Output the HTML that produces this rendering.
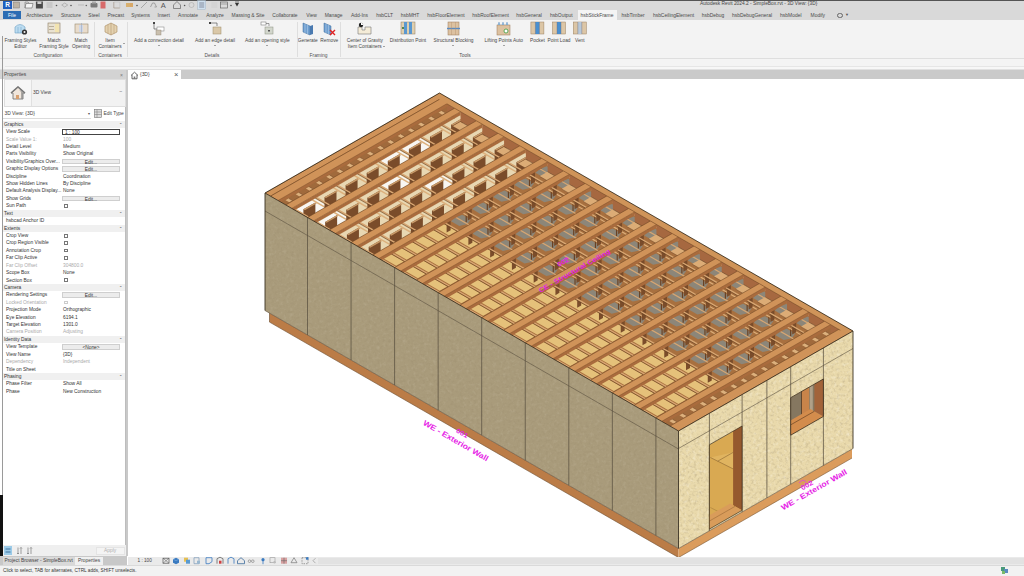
<!DOCTYPE html>
<html><head><meta charset="utf-8">
<style>
*{margin:0;padding:0;box-sizing:border-box}
html,body{width:1024px;height:576px;overflow:hidden;background:#fff;font-family:"Liberation Sans",sans-serif;color:#333}
.a{position:absolute;white-space:nowrap}
#qat{left:0;top:0;width:1024px;height:10px;background:#dadada;border-top:1px solid #555}
#tabs{left:0;top:10px;width:1024px;height:9.5px;background:#d9d9d9}
#ribbon{left:0;top:19.5px;width:1024px;height:39.5px;background:#f3f3f3;border-bottom:0.8px solid #dedede}
#opt{left:0;top:59px;width:1024px;height:11px;background:#f4f4f4;border-bottom:0.6px solid #e0e0e0}
.tab{font-size:4.95px;color:#4a4a4a;top:12.6px;transform:translateX(-50%)}
.rl{font-size:4.8px;color:#474747;text-align:center;transform:translateX(-50%);line-height:6px}
.pl{font-size:4.9px;color:#505050;top:52.8px;transform:translateX(-50%)}
.sep{top:22px;width:1px;height:35px;background:#dedede}
#props{left:3px;top:79px;width:123px;height:477px;background:#fff;border-right:1px solid #bdbdbd}
.pr{position:absolute;left:3px;width:122px;height:7.42px;font-size:4.85px;line-height:7.42px;color:#333}
.pr .l{position:absolute;left:3px}
.pr .v{position:absolute;left:60px}
.pr.h{background:#f0f0f0;color:#333}
.pr.h .l{left:1px}
.pr.g{color:#aaa}
.eb{position:absolute;left:59px;top:1px;width:58px;height:5.6px;background:#ececec;border:0.5px solid #cfcfcf;text-align:center;line-height:5px}
.cb{position:absolute;left:61px;top:1.8px;width:3.8px;height:3.8px;border:0.6px solid #777;background:#fff}
</style></head><body>
<div class="a" id="qat"></div>
<div class="a" style="left:3px;top:0.6px;width:9px;height:8px;background:#1f5fbf;color:#fff;font-size:6.5px;font-weight:bold;text-align:center;line-height:8px">R</div>
<div class="a" style="left:700px;top:1.2px;font-size:4.85px;color:#444">Autodesk Revit 2024.2 - SimpleBox.rvt - 3D View: {3D}</div>
<div class="a" id="tabs"></div>
<div class="a" style="left:3px;top:11px;width:18px;height:8px;background:#2b6cb3"></div>
<div class="a" style="left:12px;top:12.6px;font-size:4.95px;color:#fff;transform:translateX(-50%)">File</div>
<div class="a" id="ribbon"></div>
<div class="a" id="opt"></div>
<div class="a" style="left:577.5px;top:10px;width:39px;height:10px;background:#f4f4f4"></div>
<div class="a tab" style="left:597px">hsbStickFrame</div>
<div class="a tab" style="left:39.5px">Architecture</div>
<div class="a tab" style="left:71px">Structure</div>
<div class="a tab" style="left:94px">Steel</div>
<div class="a tab" style="left:115.8px">Precast</div>
<div class="a tab" style="left:140.6px">Systems</div>
<div class="a tab" style="left:163.7px">Insert</div>
<div class="a tab" style="left:188px">Annotate</div>
<div class="a tab" style="left:215px">Analyze</div>
<div class="a tab" style="left:248px">Massing & Site</div>
<div class="a tab" style="left:285px">Collaborate</div>
<div class="a tab" style="left:311.6px">View</div>
<div class="a tab" style="left:333.6px">Manage</div>
<div class="a tab" style="left:359.5px">Add-Ins</div>
<div class="a tab" style="left:384.6px">hsbCLT</div>
<div class="a tab" style="left:410px">hsbMHT</div>
<div class="a tab" style="left:446px">hsbFloorElement</div>
<div class="a tab" style="left:490.6px">hsbRoofElement</div>
<div class="a tab" style="left:529px">hsbGeneral</div>
<div class="a tab" style="left:561.3px">hsbOutput</div>
<div class="a tab" style="left:633px">hsbTimber</div>
<div class="a tab" style="left:673.5px">hsbCeilingElement</div>
<div class="a tab" style="left:713px">hsbDebug</div>
<div class="a tab" style="left:752px">hsbDebugGeneral</div>
<div class="a tab" style="left:790.8px">hsbModel</div>
<div class="a tab" style="left:817.8px">Modify</div>
<div class="a" style="left:837px;top:12.5px;width:6px;height:5px;border:0.6px solid #666;border-radius:3px"></div>
<div class="a" style="left:845px;top:12px;font-size:4px;color:#555">&#9660;</div>
<div class="a rl" style="left:20.5px;top:38.2px">Framing Styles<br>Editor</div>
<div class="a rl" style="left:54px;top:38.2px">Match<br>Framing Style</div>
<div class="a rl" style="left:81px;top:38.2px">Match<br>Opening</div>
<div class="a rl" style="left:110px;top:38.2px">Item<br>Containers</div>
<div class="a rl" style="left:159px;top:38.2px">Add a connection detail</div>
<div class="a" style="left:157.8px;top:44.5px;width:0;height:0;border-left:1.2px solid transparent;border-right:1.2px solid transparent;border-top:1.5px solid #555"></div>
<div class="a rl" style="left:215px;top:38.2px">Add an edge detail</div>
<div class="a" style="left:213.8px;top:44.5px;width:0;height:0;border-left:1.2px solid transparent;border-right:1.2px solid transparent;border-top:1.5px solid #555"></div>
<div class="a rl" style="left:267.4px;top:38.2px">Add an opening style</div>
<div class="a" style="left:266.2px;top:44.5px;width:0;height:0;border-left:1.2px solid transparent;border-right:1.2px solid transparent;border-top:1.5px solid #555"></div>
<div class="a rl" style="left:307.8px;top:38.2px">Generate</div>
<div class="a rl" style="left:329.3px;top:38.2px">Remove</div>
<div class="a rl" style="left:364.8px;top:38.2px">Center of Gravity<br>Item Containers</div>
<div class="a rl" style="left:408px;top:38.2px">Distribution Point</div>
<div class="a rl" style="left:453.5px;top:38.2px">Structural Blocking</div>
<div class="a" style="left:452.3px;top:44.5px;width:0;height:0;border-left:1.2px solid transparent;border-right:1.2px solid transparent;border-top:1.5px solid #555"></div>
<div class="a rl" style="left:503.7px;top:38.2px">Lifting Points Auto</div>
<div class="a" style="left:502.5px;top:44.5px;width:0;height:0;border-left:1.2px solid transparent;border-right:1.2px solid transparent;border-top:1.5px solid #555"></div>
<div class="a rl" style="left:537.4px;top:38.2px">Pocket</div>
<div class="a rl" style="left:559px;top:38.2px">Point Load</div>
<div class="a rl" style="left:579.8px;top:38.2px">Vent</div>
<div class="a" style="left:122.8px;top:43.3px;width:0;height:0;border-left:1.2px solid transparent;border-right:1.2px solid transparent;border-top:1.5px solid #555"></div>
<div class="a" style="left:383.3px;top:45.5px;width:0;height:0;border-left:1.2px solid transparent;border-right:1.2px solid transparent;border-top:1.5px solid #555"></div>
<div class="a pl" style="left:48px">Configuration</div>
<div class="a pl" style="left:110px">Containers</div>
<div class="a pl" style="left:212px">Details</div>
<div class="a pl" style="left:318.5px">Framing</div>
<div class="a pl" style="left:465px">Tools</div>
<div class="a sep" style="left:94px"></div>
<div class="a sep" style="left:127px"></div>
<div class="a sep" style="left:297px"></div>
<div class="a sep" style="left:340px"></div>
<svg class="a" style="left:0;top:0" width="1024" height="80"><g transform="translate(14,22)"><path d="M1,5 Q6,0 11,5 L11,11 L1,11 Z" fill="#bcdcf0" stroke="#6a9ec4" stroke-width="0.6"/><line x1="4" y1="5" x2="4" y2="11" stroke="#6a9ec4" stroke-width="0.5"/><line x1="7" y1="5" x2="7" y2="11" stroke="#6a9ec4" stroke-width="0.5"/><circle cx="10.5" cy="10" r="2.6" fill="#333"/><circle cx="10.5" cy="10" r="1" fill="#f4f4f4"/></g><g transform="translate(48,23)"><rect x="0" y="0" width="12" height="10" fill="#e9e2d2" stroke="#8a7a60" stroke-width="0.6"/><rect x="7" y="1" width="4" height="8" fill="#f3e4b0"/><line x1="1" y1="3.5" x2="6" y2="3.5" stroke="#8a7a60" stroke-width="0.5"/><line x1="1" y1="6.5" x2="6" y2="6.5" stroke="#8a7a60" stroke-width="0.5"/></g><g transform="translate(75,23)"><rect x="0" y="1" width="13" height="9" fill="#e9dccb" stroke="#9a8a70" stroke-width="0.6"/><rect x="4" y="2" width="4" height="7" fill="#d0d8e8"/><line x1="6.5" y1="0" x2="6.5" y2="11" stroke="#9aaac0" stroke-width="0.6"/></g><g transform="translate(104,22)"><path d="M1,4 L7,1 L13,4 L13,10 L7,13 L1,10 Z" fill="#e4d2b0" stroke="#a88a60" stroke-width="0.6"/><line x1="7" y1="1" x2="7" y2="13" stroke="#a88a60" stroke-width="0.5"/><line x1="4" y1="2.5" x2="4" y2="11.5" stroke="#a88a60" stroke-width="0.4"/><line x1="10" y1="2.5" x2="10" y2="11.5" stroke="#a88a60" stroke-width="0.4"/></g><g transform="translate(153,22)"><rect x="0" y="0" width="2" height="2" fill="#444"/><path d="M1,1 L1,7 L4,7" fill="none" stroke="#444" stroke-width="0.6"/><rect x="4" y="5" width="7" height="4" fill="#fff" stroke="#777" stroke-width="0.5"/><rect x="3" y="8" width="5" height="5" fill="#c9bfae" stroke="#8a8070" stroke-width="0.4"/></g><g transform="translate(209,22)"><rect x="0" y="0" width="2" height="2" fill="#444"/><path d="M1,1 L8,1 L8,4" fill="none" stroke="#444" stroke-width="0.6"/><rect x="4" y="5" width="8" height="7" fill="#dac8a8" stroke="#9a8a6a" stroke-width="0.5"/></g><g transform="translate(261,22)"><rect x="0" y="0" width="5" height="3" fill="#fff" stroke="#666" stroke-width="0.5"/><path d="M5,1.5 L8,1.5 L8,4" fill="none" stroke="#444" stroke-width="0.5"/><rect x="4" y="5" width="8" height="7" fill="#d2d6cc" stroke="#8a9080" stroke-width="0.5"/><rect x="7" y="8" width="2" height="1.5" fill="#555"/></g><g transform="translate(302,22)"><path d="M1,1 L8,4 L8,13 L1,10 Z" fill="#6f9fd0" stroke="#3a6a9a" stroke-width="0.5"/><path d="M8,4 L11,3 L11,12 L8,13 Z" fill="#4a7ab0"/><line x1="3" y1="2" x2="3" y2="11" stroke="#bcd4ee" stroke-width="0.5"/><line x1="5.5" y1="3" x2="5.5" y2="12" stroke="#bcd4ee" stroke-width="0.5"/></g><g transform="translate(323,22)"><path d="M1,1 L8,4 L8,13 L1,10 Z" fill="#6f9fd0" stroke="#3a6a9a" stroke-width="0.5"/><line x1="3" y1="2" x2="3" y2="11" stroke="#bcd4ee" stroke-width="0.5"/><line x1="5.5" y1="3" x2="5.5" y2="12" stroke="#bcd4ee" stroke-width="0.5"/><path d="M7,8 L12,13 M12,8 L7,13" stroke="#e02020" stroke-width="1.4"/></g><g transform="translate(357,22)"><path d="M1,12 L1,5 L5,5 L5,8 L8,8 L8,5 L14,5 L14,12 Z" fill="#f4ecd8" stroke="#777" stroke-width="0.6"/><circle cx="4" cy="3" r="2.2" fill="#222"/><path d="M4,0.8 A2.2,2.2 0 0 1 6.2,3 L4,3 Z" fill="#fff"/></g><g transform="translate(401,22)"><rect x="0" y="0" width="14" height="12" fill="#e0cfae" stroke="#8a7a60" stroke-width="0.5"/><rect x="3" y="0" width="3" height="12" fill="#5a98d0"/><rect x="8" y="0" width="3" height="12" fill="#5a98d0"/><circle cx="2" cy="6" r="1" fill="#2a6a2a"/></g><g transform="translate(447,22)"><rect x="1" y="0" width="11" height="13" fill="#dcc1a0" stroke="#9a7a5a" stroke-width="0.5"/><line x1="0" y1="6.5" x2="13" y2="6.5" stroke="#5a8ac0" stroke-width="1.4"/><line x1="4.5" y1="0" x2="4.5" y2="13" stroke="#b09070" stroke-width="0.4"/><line x1="8.5" y1="0" x2="8.5" y2="13" stroke="#b09070" stroke-width="0.4"/></g><g transform="translate(497,22)"><rect x="0" y="3" width="13" height="10" fill="#dcc1a0" stroke="#9a7a5a" stroke-width="0.5"/><path d="M1,3 L2,0 L3,3 M5,3 L6,0 L7,3 M9,3 L10,0 L11,3" fill="#88b8d8" stroke="#5a8ac0" stroke-width="0.4"/><circle cx="9" cy="9" r="2" fill="#fff" stroke="#3a9a3a" stroke-width="0.8"/></g><g transform="translate(530.9,22)"><rect x="0" y="0" width="13" height="12" fill="#dcc6a6" stroke="#9a8060" stroke-width="0.5"/><rect x="4.5" y="0" width="4" height="12" fill="#4a90d0"/><line x1="4.5" y1="0" x2="4.5" y2="12" stroke="#6a6a7a" stroke-width="0.4"/><line x1="8.5" y1="0" x2="8.5" y2="12" stroke="#6a6a7a" stroke-width="0.4"/></g><g transform="translate(552.5,22)"><rect x="0" y="0" width="13" height="12" fill="#dcc6a6" stroke="#9a8060" stroke-width="0.5"/><rect x="4.5" y="0" width="4" height="12" fill="#4a90d0"/><line x1="4.5" y1="0" x2="4.5" y2="12" stroke="#6a6a7a" stroke-width="0.4"/><line x1="8.5" y1="0" x2="8.5" y2="12" stroke="#6a6a7a" stroke-width="0.4"/></g><g transform="translate(573.3,22)"><rect x="0" y="0" width="13" height="12" fill="#dcc6a6" stroke="#9a8060" stroke-width="0.5"/><rect x="4.5" y="0" width="4" height="12" fill="#b8c8d8"/><line x1="4.5" y1="0" x2="4.5" y2="12" stroke="#6a6a7a" stroke-width="0.4"/><line x1="8.5" y1="0" x2="8.5" y2="12" stroke="#6a6a7a" stroke-width="0.4"/></g></svg>
<svg class="a" style="left:0;top:0" width="260" height="11"><g transform="translate(16.5,5)"><rect x="-3" y="-3" width="6" height="6" fill="#bdb3a3" stroke="#7a7a7a" stroke-width="0.5"/></g><g transform="translate(29,5)"><path d="M-4,3 L-3,-1.5 L4,-1.5 L3,3 Z" fill="#f4f4f4" stroke="#666" stroke-width="0.6"/><path d="M-4,3 V-3 H-1 L0,-2" fill="none" stroke="#666" stroke-width="0.5"/></g><g transform="translate(39.4,5)"><rect x="-3.5" y="-3.5" width="7" height="7" fill="#4a4a4a"/><rect x="-2" y="-3.5" width="4" height="2.5" fill="#ccc"/></g><g transform="translate(49.5,5)"><rect x="-3" y="-3" width="6" height="6" fill="#c8c8c8"/></g><g transform="translate(56.5,5)"><circle cx="0" cy="0.5" r="0.8" fill="#555"/></g><g transform="translate(64.7,5)"><path d="M-3,0 L0,-2 L3,0 L0,2 Z" fill="none" stroke="#999" stroke-width="0.6"/></g><g transform="translate(71,5)"><circle cx="0" cy="0.5" r="0.8" fill="#555"/></g><g transform="translate(81,5)"><path d="M-3,0 H3" stroke="#bbb" stroke-width="1"/></g><g transform="translate(86.3,5)"><circle cx="0" cy="0.5" r="0.8" fill="#666"/></g><g transform="translate(94,5)"><rect x="-3.5" y="-2" width="7" height="4.5" rx="1" fill="#7a7a7a"/><rect x="-2" y="-3.5" width="4" height="2" fill="#aaa"/></g><g transform="translate(103,5)"><rect x="-2.5" y="-3.5" width="5" height="7" fill="#d86a6a"/></g><g transform="translate(116.8,5)"><path d="M-3,-3 V3 H3" fill="none" stroke="#9a8a7a" stroke-width="0.6"/><path d="M-3,-3 H3 V3" fill="none" stroke="#bbb" stroke-width="0.5"/></g><g transform="translate(128,5)"><rect x="-2" y="-2" width="6" height="4" fill="#d8b070"/></g><g transform="translate(132,5)"><rect x="-2" y="-2" width="3" height="4" fill="#d8a868"/></g><g transform="translate(137,5)"><circle cx="0" cy="0.5" r="0.8" fill="#555"/></g><g transform="translate(144,5)"><path d="M-3,3 L3,-3" stroke="#999" stroke-width="0.8"/></g><g transform="translate(153.5,5)"><path d="M-3,2 L-1,-2 H1 M1,2 H3 L1,-2" fill="none" stroke="#888" stroke-width="0.7"/></g><g transform="translate(163.6,5)"><text x="-2.8" y="3.2" font-size="7.5" fill="#555" font-family="Liberation Sans">A</text></g><g transform="translate(177,5)"><path d="M-3.5,0 L0,-3.5 L3.5,0 V3.5 H-3.5 Z" fill="none" stroke="#666" stroke-width="0.7"/></g><g transform="translate(184.6,5)"><circle cx="0" cy="0.5" r="0.8" fill="#555"/></g><g transform="translate(191.5,5)"><circle cx="0" cy="0" r="2.5" fill="none" stroke="#aaa" stroke-width="0.6"/></g><g transform="translate(201.7,5)"><rect x="-4" y="-4.5" width="8" height="9" fill="#cfe0ef" stroke="#9ab" stroke-width="0.4"/><path d="M-2.5,-2 H2.5 M-2.5,0 H2.5 M-2.5,2 H2.5" stroke="#556" stroke-width="0.6"/></g><g transform="translate(214.4,5)"><rect x="-3" y="-3" width="6" height="6" fill="#d4d4d4"/></g><g transform="translate(224,5)"><rect x="-3.5" y="-3" width="7" height="6" fill="none" stroke="#666" stroke-width="0.7"/><path d="M-3.5,-1 H3.5" stroke="#666" stroke-width="0.5"/></g><g transform="translate(231,5)"><circle cx="0" cy="0.5" r="0.8" fill="#555"/></g><g transform="translate(237,5)"><path d="M-2,-2 H2 L0,1.5 Z" fill="#333"/><path d="M-2,-3 H2" stroke="#333" stroke-width="0.6"/></g></svg>
<div class="a" style="left:0;top:70px;width:127px;height:9px;background:#d3d3d3"></div>
<div class="a" style="left:4px;top:72px;font-size:4.9px;color:#444">Properties</div>
<div class="a" style="left:120px;top:71.5px;font-size:5px;color:#777">&#215;</div>
<div class="a" style="left:128px;top:70px;width:896px;height:9px;background:#cacaca"></div>
<div class="a" style="left:128px;top:70px;width:53px;height:9px;background:#fff"></div>
<div class="a" style="left:140px;top:72px;font-size:4.9px;color:#444">{3D}</div>
<svg class="a" style="left:129.5px;top:71px" width="9" height="9"><path d="M1,4.5 L4.5,1.2 L8,4.5 M2,3.8 V7.8 H7 V3.8" fill="none" stroke="#555" stroke-width="0.9"/><rect x="3.7" y="5.5" width="1.6" height="2.3" fill="#777"/></svg>
<div class="a" style="left:174px;top:70.3px;font-size:7.5px;color:#555">&#215;</div>
<div class="a" style="left:126px;top:70px;width:2px;height:486px;background:#c9c9c9"></div>
<div class="a" id="props" style="border-left:0"></div>
<div class="pr h" style="top:120.70px"><span class="l">Graphics</span><span style="position:absolute;right:3px;font-size:4px">&#8963;</span></div>
<div class="pr" style="top:128.12px"><span class="l">View Scale</span><div class="eb" style="background:#fff;border:0.6px solid #444;text-align:left;padding-left:2px">1 : 100</div></div>
<div class="pr g" style="top:135.54px"><span class="l">Scale Value    1:</span><span class="v">100</span></div>
<div class="pr" style="top:142.96px"><span class="l">Detail Level</span><span class="v">Medium</span></div>
<div class="pr" style="top:150.38px"><span class="l">Parts Visibility</span><span class="v">Show Original</span></div>
<div class="pr" style="top:157.80px"><span class="l">Visibility/Graphics Over...</span><div class="eb">Edit...</div></div>
<div class="pr" style="top:165.22px"><span class="l">Graphic Display Options</span><div class="eb">Edit...</div></div>
<div class="pr" style="top:172.64px"><span class="l">Discipline</span><span class="v">Coordination</span></div>
<div class="pr" style="top:180.06px"><span class="l">Show Hidden Lines</span><span class="v">By Discipline</span></div>
<div class="pr" style="top:187.48px"><span class="l">Default Analysis Display...</span><span class="v">None</span></div>
<div class="pr" style="top:194.90px"><span class="l">Show Grids</span><div class="eb">Edit...</div></div>
<div class="pr" style="top:202.32px"><span class="l">Sun Path</span><div class="cb"></div></div>
<div class="pr h" style="top:209.74px"><span class="l">Text</span><span style="position:absolute;right:3px;font-size:4px">&#8963;</span></div>
<div class="pr" style="top:217.16px"><span class="l">hsbcad Anchor ID</span><span class="v"></span></div>
<div class="pr h" style="top:224.58px"><span class="l">Extents</span><span style="position:absolute;right:3px;font-size:4px">&#8963;</span></div>
<div class="pr" style="top:232.00px"><span class="l">Crop View</span><div class="cb"></div></div>
<div class="pr" style="top:239.42px"><span class="l">Crop Region Visible</span><div class="cb"></div></div>
<div class="pr" style="top:246.84px"><span class="l">Annotation Crop</span><div class="cb"></div></div>
<div class="pr" style="top:254.26px"><span class="l">Far Clip Active</span><div class="cb"></div></div>
<div class="pr g" style="top:261.68px"><span class="l">Far Clip Offset</span><span class="v">304800.0</span></div>
<div class="pr" style="top:269.10px"><span class="l">Scope Box</span><span class="v">None</span></div>
<div class="pr" style="top:276.52px"><span class="l">Section Box</span><div class="cb"></div></div>
<div class="pr h" style="top:283.94px"><span class="l">Camera</span><span style="position:absolute;right:3px;font-size:4px">&#8963;</span></div>
<div class="pr" style="top:291.36px"><span class="l">Rendering Settings</span><div class="eb">Edit...</div></div>
<div class="pr g" style="top:298.78px"><span class="l">Locked Orientation</span><div class="cb" style="border-color:#ccc"></div></div>
<div class="pr" style="top:306.20px"><span class="l">Projection Mode</span><span class="v">Orthographic</span></div>
<div class="pr" style="top:313.62px"><span class="l">Eye Elevation</span><span class="v">6194.1</span></div>
<div class="pr" style="top:321.04px"><span class="l">Target Elevation</span><span class="v">1301.0</span></div>
<div class="pr g" style="top:328.46px"><span class="l">Camera Position</span><span class="v">Adjusting</span></div>
<div class="pr h" style="top:335.88px"><span class="l">Identity Data</span><span style="position:absolute;right:3px;font-size:4px">&#8963;</span></div>
<div class="pr" style="top:343.30px"><span class="l">View Template</span><div class="eb">&lt;None&gt;</div></div>
<div class="pr" style="top:350.72px"><span class="l">View Name</span><span class="v">{3D}</span></div>
<div class="pr g" style="top:358.14px"><span class="l">Dependency</span><span class="v">Independent</span></div>
<div class="pr" style="top:365.56px"><span class="l">Title on Sheet</span><span class="v"></span></div>
<div class="pr h" style="top:372.98px"><span class="l">Phasing</span><span style="position:absolute;right:3px;font-size:4px">&#8963;</span></div>
<div class="pr" style="top:380.40px"><span class="l">Phase Filter</span><span class="v">Show All</span></div>
<div class="pr" style="top:387.82px"><span class="l">Phase</span><span class="v">New Construction</span></div>
<div class="a" style="left:0;top:495px;width:2.5px;height:65px;background:#111"></div>
<div class="a" style="left:1.5px;top:36px;width:1px;height:459px;background:#9a9a9a"></div>
<div class="a" style="left:5px;top:65.5px;width:1019px;height:3px;background:#f7f7f7;border-top:0.5px solid #e6e6e6"></div>
<svg class="a" style="left:0;top:0" width="1024" height="576" viewBox="0 0 1024 576">
<defs><filter id="osb" x="0" y="0" width="100%" height="100%"><feTurbulence type="fractalNoise" baseFrequency="0.35" numOctaves="2" seed="7"/><feColorMatrix type="matrix" values="0 0 0 0 0.30  0 0 0 0 0.24  0 0 0 0 0.14  2.2 0 0 0 -1.05"/><feComposite in2="SourceGraphic" operator="in"/></filter><filter id="osb2" x="0" y="0" width="100%" height="100%"><feTurbulence type="fractalNoise" baseFrequency="0.3" numOctaves="2" seed="11"/><feColorMatrix type="matrix" values="0 0 0 0 1  0 0 0 0 0.97  0 0 0 0 0.88  0 2.2 0 0 -1.1"/><feComposite in2="SourceGraphic" operator="in"/></filter><clipPath id="cdoor"><polygon points="709.40,444.79 742.10,426.05 742.10,510.35 709.40,529.09"/></clipPath><clipPath id="cwin"><polygon points="790.70,397.70 823.40,378.96 823.40,416.46 790.70,435.20"/></clipPath><clipPath id="croof"><polygon points="265.00,193.00 439.50,93.00 853.00,331.00 678.50,431.00"/></clipPath></defs>
<polygon points="269.50,313.09 678.50,548.50 678.50,557.50 269.50,322.09" fill="#bb7c47"/>
<polygon points="678.50,548.50 852.00,449.07 852.00,458.07 678.50,557.50" fill="#db9c5c"/>
<line x1="269.50" y1="322.09" x2="678.50" y2="557.50" stroke="#6b4a2a" stroke-width="0.6"/>
<line x1="678.50" y1="557.50" x2="852.00" y2="458.07" stroke="#7a5530" stroke-width="0.6"/>
<line x1="269.50" y1="313.09" x2="269.50" y2="322.09" stroke="#6b4a2a" stroke-width="0.6"/>
<polygon points="265.00,193.00 678.50,431.00 678.50,548.50 265.00,310.50" fill="#a99b7b"/>
<polygon points="678.50,431.00 853.00,331.00 853.00,448.50 678.50,548.50" fill="#e9d9ab"/>
<g opacity="0.30"><polygon points="265.00,193.00 678.50,431.00 678.50,548.50 265.00,310.50" fill="#fff" filter="url(#osb)"/></g>
<g opacity="0.10"><polygon points="265.00,193.00 678.50,431.00 678.50,548.50 265.00,310.50" fill="#fff" filter="url(#osb2)"/></g>
<g opacity="0.35"><polygon points="678.50,431.00 853.00,331.00 853.00,448.50 678.50,548.50" fill="#fff" filter="url(#osb)"/></g>
<g opacity="0.40"><polygon points="678.50,431.00 853.00,331.00 853.00,448.50 678.50,548.50" fill="#fff" filter="url(#osb2)"/></g>
<line x1="265.00" y1="211.00" x2="678.50" y2="449.00" stroke="#5a5040" stroke-width="0.6"/>
<line x1="678.50" y1="448.50" x2="853.00" y2="348.50" stroke="#5a5040" stroke-width="0.6"/>
<line x1="307.50" y1="217.46" x2="307.50" y2="334.96" stroke="#5a5040" stroke-width="0.75"/>
<line x1="351.05" y1="242.53" x2="351.05" y2="360.03" stroke="#5a5040" stroke-width="0.75"/>
<line x1="394.60" y1="267.59" x2="394.60" y2="385.09" stroke="#5a5040" stroke-width="0.75"/>
<line x1="438.15" y1="292.66" x2="438.15" y2="410.16" stroke="#5a5040" stroke-width="0.75"/>
<line x1="481.70" y1="317.73" x2="481.70" y2="435.23" stroke="#5a5040" stroke-width="0.75"/>
<line x1="525.25" y1="342.79" x2="525.25" y2="460.29" stroke="#5a5040" stroke-width="0.75"/>
<line x1="568.80" y1="367.86" x2="568.80" y2="485.36" stroke="#5a5040" stroke-width="0.75"/>
<line x1="612.35" y1="392.93" x2="612.35" y2="510.43" stroke="#5a5040" stroke-width="0.75"/>
<line x1="655.90" y1="417.99" x2="655.90" y2="535.49" stroke="#5a5040" stroke-width="0.75"/>
<line x1="709.40" y1="413.29" x2="709.40" y2="530.79" stroke="#5a5040" stroke-width="0.75"/>
<line x1="742.10" y1="394.55" x2="742.10" y2="512.05" stroke="#5a5040" stroke-width="0.75"/>
<line x1="766.90" y1="380.34" x2="766.90" y2="497.84" stroke="#5a5040" stroke-width="0.75"/>
<line x1="790.70" y1="366.70" x2="790.70" y2="484.20" stroke="#5a5040" stroke-width="0.75"/>
<line x1="823.40" y1="347.96" x2="823.40" y2="465.46" stroke="#5a5040" stroke-width="0.75"/>
<g clip-path="url(#cdoor)"><polygon points="709.40,444.79 742.10,426.05 742.10,510.35 709.40,529.09" fill="#d9a952"/><polygon points="710.40,457.50 733.30,469.00 733.30,452.30" fill="#e0b460"/><line x1="710.40" y1="457.50" x2="733.30" y2="469.00" stroke="#8a6430" stroke-width="0.6"/><line x1="717.70" y1="461.20" x2="733.30" y2="452.30" stroke="#8a6430" stroke-width="0.6"/><line x1="710.40" y1="507.50" x2="722.00" y2="513.50" stroke="#9a7436" stroke-width="0.5"/><polygon points="742.10,426.05 733.10,420.87 733.10,505.17 742.10,510.35" fill="#95592e"/><polygon points="709.40,529.09 742.10,510.35 730.10,503.45 697.40,522.19" fill="#d99c5a"/><line x1="702.40" y1="525.06" x2="735.10" y2="506.32" stroke="#9a6a38" stroke-width="0.6"/></g>
<polygon points="709.40,444.79 742.10,426.05 742.10,510.35 709.40,529.09" fill="none" stroke="#3e3020" stroke-width="0.7"/>
<g clip-path="url(#cwin)"><polygon points="790.70,397.70 823.40,378.96 823.40,416.46 790.70,435.20" fill="#857760"/><polygon points="801.10,371.40 801.90,370.95 801.90,428.45 801.10,428.90" fill="#4a3420"/><polygon points="801.90,370.95 809.20,366.76 809.20,424.26 801.90,428.45" fill="#c8844a"/><polygon points="809.80,366.42 812.80,364.70 812.80,422.20 809.80,423.92" fill="#b0a088"/><polygon points="823.40,378.96 814.40,373.78 814.40,411.28 823.40,416.46" fill="#a2633a"/><polygon points="790.70,435.20 823.40,416.46 810.40,408.98 777.70,427.72" fill="#d38c4c"/><line x1="781.70" y1="430.02" x2="814.40" y2="411.28" stroke="#6a4424" stroke-width="0.7"/></g>
<polygon points="790.70,397.70 823.40,378.96 823.40,416.46 790.70,435.20" fill="none" stroke="#3e3020" stroke-width="0.8"/>
<line x1="265.00" y1="193.00" x2="265.00" y2="310.50" stroke="#3a3122" stroke-width="0.9"/>
<line x1="678.50" y1="431.00" x2="678.50" y2="548.50" stroke="#3a3122" stroke-width="0.9"/>
<line x1="853.00" y1="331.00" x2="853.00" y2="448.50" stroke="#3a3122" stroke-width="0.9"/>
<line x1="265.00" y1="310.50" x2="678.50" y2="548.50" stroke="#5a4a35" stroke-width="0.6"/>
<line x1="678.50" y1="548.50" x2="853.00" y2="448.50" stroke="#5a4a35" stroke-width="0.6"/>
<g clip-path="url(#croof)"><polygon points="265.00,193.00 439.50,93.00 853.00,331.00 678.50,431.00" fill="#a8703f"/><polygon points="278.00,200.48 285.76,204.95 454.56,108.22 446.80,103.75" fill="#a06a3c"/><polygon points="285.50,200.20 289.26,202.37 292.46,200.54 288.70,198.37" fill="#dcb07c"/><line x1="288.70" y1="198.37" x2="292.46" y2="200.54" stroke="#6e4526" stroke-width="0.5"/><polygon points="295.70,194.36 299.46,196.53 302.66,194.69 298.90,192.53" fill="#dcb07c"/><line x1="298.90" y1="192.53" x2="302.66" y2="194.69" stroke="#6e4526" stroke-width="0.5"/><polygon points="305.90,188.51 309.66,190.68 312.86,188.85 309.10,186.68" fill="#dcb07c"/><line x1="309.10" y1="186.68" x2="312.86" y2="188.85" stroke="#6e4526" stroke-width="0.5"/><polygon points="316.10,182.67 319.86,184.83 323.06,183.00 319.30,180.84" fill="#dcb07c"/><line x1="319.30" y1="180.84" x2="323.06" y2="183.00" stroke="#6e4526" stroke-width="0.5"/><polygon points="326.30,176.82 330.06,178.99 333.26,177.16 329.50,174.99" fill="#dcb07c"/><line x1="329.50" y1="174.99" x2="333.26" y2="177.16" stroke="#6e4526" stroke-width="0.5"/><polygon points="336.50,170.98 340.26,173.14 343.46,171.31 339.70,169.14" fill="#dcb07c"/><line x1="339.70" y1="169.14" x2="343.46" y2="171.31" stroke="#6e4526" stroke-width="0.5"/><polygon points="346.70,165.13 350.46,167.30 353.66,165.47 349.90,163.30" fill="#dcb07c"/><line x1="349.90" y1="163.30" x2="353.66" y2="165.47" stroke="#6e4526" stroke-width="0.5"/><polygon points="356.90,159.29 360.66,161.45 363.86,159.62 360.10,157.45" fill="#dcb07c"/><line x1="360.10" y1="157.45" x2="363.86" y2="159.62" stroke="#6e4526" stroke-width="0.5"/><polygon points="367.10,153.44 370.86,155.61 374.06,153.77 370.30,151.61" fill="#dcb07c"/><line x1="370.30" y1="151.61" x2="374.06" y2="153.77" stroke="#6e4526" stroke-width="0.5"/><polygon points="377.30,147.60 381.06,149.76 384.26,147.93 380.50,145.76" fill="#dcb07c"/><line x1="380.50" y1="145.76" x2="384.26" y2="147.93" stroke="#6e4526" stroke-width="0.5"/><polygon points="387.50,141.75 391.26,143.92 394.46,142.08 390.70,139.92" fill="#dcb07c"/><line x1="390.70" y1="139.92" x2="394.46" y2="142.08" stroke="#6e4526" stroke-width="0.5"/><polygon points="397.70,135.91 401.46,138.07 404.66,136.24 400.90,134.07" fill="#dcb07c"/><line x1="400.90" y1="134.07" x2="404.66" y2="136.24" stroke="#6e4526" stroke-width="0.5"/><polygon points="407.90,130.06 411.66,132.23 414.86,130.39 411.10,128.23" fill="#dcb07c"/><line x1="411.10" y1="128.23" x2="414.86" y2="130.39" stroke="#6e4526" stroke-width="0.5"/><polygon points="418.10,124.22 421.86,126.38 425.06,124.55 421.30,122.38" fill="#dcb07c"/><line x1="421.30" y1="122.38" x2="425.06" y2="124.55" stroke="#6e4526" stroke-width="0.5"/><polygon points="428.30,118.37 432.06,120.54 435.26,118.70 431.50,116.54" fill="#dcb07c"/><line x1="431.50" y1="116.54" x2="435.26" y2="118.70" stroke="#6e4526" stroke-width="0.5"/><polygon points="438.50,112.53 442.26,114.69 445.46,112.86 441.70,110.69" fill="#dcb07c"/><line x1="441.70" y1="110.69" x2="445.46" y2="112.86" stroke="#6e4526" stroke-width="0.5"/><polygon points="448.70,106.68 452.46,108.85 455.66,107.01 451.90,104.85" fill="#dcb07c"/><line x1="451.90" y1="104.85" x2="455.66" y2="107.01" stroke="#6e4526" stroke-width="0.5"/><polygon points="291.76,208.40 307.53,217.48 328.63,205.39 312.86,196.31" fill="#dcc49a"/><polygon points="296.42,209.36 309.03,216.62 327.63,205.96 315.02,198.70" fill="#f8f6f2"/><polygon points="303.38,209.35 315.38,202.47 315.38,216.47 303.38,223.35" fill="#7a4c2a"/><polygon points="303.38,209.35 315.38,202.47 316.88,203.34 304.88,210.21" fill="#c89a68"/><polygon points="308.76,198.66 324.53,207.73 326.03,206.88 310.26,197.80" fill="#dcb07c"/><polygon points="312.86,196.31 328.63,205.39 349.73,193.29 333.96,184.22" fill="#dcc49a"/><polygon points="317.52,197.27 330.13,204.53 348.73,193.87 336.12,186.61" fill="#e8d7b2"/><polygon points="324.48,197.26 336.48,190.38 336.48,204.38 324.48,211.26" fill="#7a4c2a"/><polygon points="324.48,197.26 336.48,190.38 337.98,191.24 325.98,198.12" fill="#c89a68"/><polygon points="329.86,186.57 345.63,195.64 347.13,194.78 331.36,185.71" fill="#dcb07c"/><polygon points="333.96,184.22 349.73,193.29 370.83,181.20 355.06,172.13" fill="#dcc49a"/><polygon points="338.62,185.18 351.23,192.43 369.83,181.78 357.22,174.52" fill="#e8d7b2"/><polygon points="345.58,185.17 357.58,178.29 357.58,192.29 345.58,199.17" fill="#7a4c2a"/><polygon points="345.58,185.17 357.58,178.29 359.08,179.15 347.08,186.03" fill="#c89a68"/><polygon points="350.96,174.48 366.73,183.55 368.23,182.69 352.46,173.62" fill="#dcb07c"/><polygon points="355.06,172.13 370.83,181.20 391.93,169.11 376.16,160.04" fill="#dcc49a"/><polygon points="359.72,173.08 372.33,180.34 390.93,169.68 378.32,162.43" fill="#e8d7b2"/><polygon points="366.68,173.07 378.68,166.20 378.68,180.20 366.68,187.07" fill="#7a4c2a"/><polygon points="366.68,173.07 378.68,166.20 380.18,167.06 368.18,173.94" fill="#c89a68"/><polygon points="372.06,162.39 387.83,171.46 389.33,170.60 373.56,161.53" fill="#dcb07c"/><polygon points="376.16,160.04 391.93,169.11 413.03,157.02 397.26,147.95" fill="#dcc49a"/><polygon points="380.82,160.99 393.43,168.25 412.03,157.59 399.42,150.33" fill="#f8f6f2"/><polygon points="387.78,160.98 399.78,154.11 399.78,168.11 387.78,174.98" fill="#7a4c2a"/><polygon points="387.78,160.98 399.78,154.11 401.28,154.97 389.28,161.85" fill="#c89a68"/><polygon points="393.16,150.30 408.93,159.37 410.43,158.51 394.66,149.44" fill="#dcb07c"/><polygon points="397.26,147.95 413.03,157.02 434.13,144.93 418.36,135.85" fill="#dcc49a"/><polygon points="401.92,148.90 414.53,156.16 433.13,145.50 420.52,138.24" fill="#f8f6f2"/><polygon points="408.88,148.89 420.88,142.01 420.88,156.01 408.88,162.89" fill="#7a4c2a"/><polygon points="408.88,148.89 420.88,142.01 422.38,142.88 410.38,149.75" fill="#c89a68"/><polygon points="414.26,138.20 430.03,147.28 431.53,146.42 415.76,137.34" fill="#dcb07c"/><polygon points="418.36,135.85 434.13,144.93 455.23,132.84 439.46,123.76" fill="#dcc49a"/><polygon points="423.02,136.81 435.63,144.07 454.23,133.41 441.62,126.15" fill="#e8d7b2"/><polygon points="429.98,136.80 441.98,129.92 441.98,143.92 429.98,150.80" fill="#7a4c2a"/><polygon points="429.98,136.80 441.98,129.92 443.48,130.79 431.48,137.66" fill="#c89a68"/><polygon points="435.36,126.11 451.13,135.18 452.63,134.33 436.86,125.25" fill="#dcb07c"/><polygon points="439.46,123.76 455.23,132.84 476.33,120.74 460.56,111.67" fill="#dcc49a"/><polygon points="444.12,124.72 456.73,131.98 475.33,121.32 462.72,114.06" fill="#e8d7b2"/><polygon points="451.08,124.71 463.08,117.83 463.08,131.83 451.08,138.71" fill="#7a4c2a"/><polygon points="451.08,124.71 463.08,117.83 464.58,118.69 452.58,125.57" fill="#c89a68"/><polygon points="456.46,114.02 472.23,123.09 473.73,122.23 457.96,113.16" fill="#dcb07c"/><polygon points="291.76,208.40 307.53,217.48 309.03,216.62 293.26,207.54" fill="#d8a672"/><line x1="291.46" y1="208.58" x2="307.23" y2="217.65" stroke="#5e3b1e" stroke-width="0.55"/><polygon points="312.86,196.31 328.63,205.39 330.13,204.53 314.36,195.45" fill="#d8a672"/><line x1="312.56" y1="196.48" x2="328.33" y2="205.56" stroke="#5e3b1e" stroke-width="0.55"/><polygon points="333.96,184.22 349.73,193.29 351.23,192.43 335.46,183.36" fill="#d8a672"/><line x1="333.66" y1="184.39" x2="349.43" y2="193.47" stroke="#5e3b1e" stroke-width="0.55"/><polygon points="355.06,172.13 370.83,181.20 372.33,180.34 356.56,171.27" fill="#d8a672"/><line x1="354.76" y1="172.30" x2="370.53" y2="181.37" stroke="#5e3b1e" stroke-width="0.55"/><polygon points="376.16,160.04 391.93,169.11 393.43,168.25 377.66,159.18" fill="#d8a672"/><line x1="375.86" y1="160.21" x2="391.63" y2="169.28" stroke="#5e3b1e" stroke-width="0.55"/><polygon points="397.26,147.95 413.03,157.02 414.53,156.16 398.76,147.09" fill="#d8a672"/><line x1="396.96" y1="148.12" x2="412.73" y2="157.19" stroke="#5e3b1e" stroke-width="0.55"/><polygon points="418.36,135.85 434.13,144.93 435.63,144.07 419.86,134.99" fill="#d8a672"/><line x1="418.06" y1="136.03" x2="433.83" y2="145.10" stroke="#5e3b1e" stroke-width="0.55"/><polygon points="439.46,123.76 455.23,132.84 456.73,131.98 440.96,122.90" fill="#d8a672"/><line x1="439.16" y1="123.93" x2="454.93" y2="133.01" stroke="#5e3b1e" stroke-width="0.55"/><polygon points="460.56,111.67 476.33,120.74 477.83,119.88 462.06,110.81" fill="#d8a672"/><line x1="460.26" y1="111.84" x2="476.03" y2="120.92" stroke="#5e3b1e" stroke-width="0.55"/><polygon points="313.53,220.93 329.29,230.00 350.39,217.91 334.63,208.84" fill="#dcc49a"/><polygon points="318.18,221.89 330.79,229.14 349.39,218.48 336.78,211.23" fill="#f8f6f2"/><polygon points="325.15,221.88 337.15,215.00 337.15,229.00 325.15,235.88" fill="#7a4c2a"/><polygon points="325.15,221.88 337.15,215.00 338.65,215.86 326.65,222.74" fill="#c89a68"/><polygon points="330.53,211.19 346.29,220.26 347.79,219.40 332.03,210.33" fill="#dcb07c"/><polygon points="334.63,208.84 350.39,217.91 371.49,205.82 355.73,196.75" fill="#dcc49a"/><polygon points="339.28,209.79 351.89,217.05 370.49,206.39 357.88,199.13" fill="#e8d7b2"/><polygon points="346.25,209.78 358.25,202.91 358.25,216.91 346.25,223.78" fill="#7a4c2a"/><polygon points="346.25,209.78 358.25,202.91 359.75,203.77 347.75,210.65" fill="#c89a68"/><polygon points="351.63,199.10 367.39,208.17 368.89,207.31 353.13,198.24" fill="#dcb07c"/><polygon points="355.73,196.75 371.49,205.82 392.59,193.73 376.83,184.66" fill="#dcc49a"/><polygon points="360.38,197.70 372.99,204.96 391.59,194.30 378.98,187.04" fill="#e8d7b2"/><polygon points="367.35,197.69 379.35,190.82 379.35,204.82 367.35,211.69" fill="#7a4c2a"/><polygon points="367.35,197.69 379.35,190.82 380.85,191.68 368.85,198.56" fill="#c89a68"/><polygon points="372.73,187.01 388.49,196.08 389.99,195.22 374.23,186.15" fill="#dcb07c"/><polygon points="376.83,184.66 392.59,193.73 413.69,181.64 397.93,172.56" fill="#dcc49a"/><polygon points="381.48,185.61 394.09,192.87 412.69,182.21 400.08,174.95" fill="#f8f6f2"/><polygon points="388.45,185.60 400.45,178.72 400.45,192.72 388.45,199.60" fill="#7a4c2a"/><polygon points="388.45,185.60 400.45,178.72 401.95,179.59 389.95,186.46" fill="#c89a68"/><polygon points="393.83,174.91 409.59,183.99 411.09,183.13 395.33,174.05" fill="#dcb07c"/><polygon points="397.93,172.56 413.69,181.64 434.79,169.54 419.03,160.47" fill="#dcc49a"/><polygon points="402.58,173.52 415.19,180.78 433.79,170.12 421.18,162.86" fill="#e8d7b2"/><polygon points="409.55,173.51 421.55,166.63 421.55,180.63 409.55,187.51" fill="#7a4c2a"/><polygon points="409.55,173.51 421.55,166.63 423.05,167.50 411.05,174.37" fill="#c89a68"/><polygon points="414.93,162.82 430.69,171.89 432.19,171.03 416.43,161.96" fill="#dcb07c"/><polygon points="419.03,160.47 434.79,169.54 455.89,157.45 440.13,148.38" fill="#dcc49a"/><polygon points="423.68,161.43 436.29,168.69 454.89,158.03 442.28,150.77" fill="#e8d7b2"/><polygon points="430.65,161.42 442.65,154.54 442.65,168.54 430.65,175.42" fill="#7a4c2a"/><polygon points="430.65,161.42 442.65,154.54 444.15,155.40 432.15,162.28" fill="#c89a68"/><polygon points="436.03,150.73 451.79,159.80 453.29,158.94 437.53,149.87" fill="#dcb07c"/><polygon points="440.13,148.38 455.89,157.45 476.99,145.36 461.23,136.29" fill="#dcc49a"/><polygon points="444.78,149.34 457.39,156.59 475.99,145.93 463.38,138.68" fill="#e8d7b2"/><polygon points="451.75,149.33 463.75,142.45 463.75,156.45 451.75,163.33" fill="#7a4c2a"/><polygon points="451.75,149.33 463.75,142.45 465.25,143.31 453.25,150.19" fill="#c89a68"/><polygon points="457.13,138.64 472.89,147.71 474.39,146.85 458.63,137.78" fill="#dcb07c"/><polygon points="461.23,136.29 476.99,145.36 498.09,133.27 482.33,124.20" fill="#dcc49a"/><polygon points="465.88,137.24 478.49,144.50 497.09,133.84 484.48,126.58" fill="#e8d7b2"/><polygon points="472.85,137.23 484.85,130.36 484.85,144.36 472.85,151.23" fill="#7a4c2a"/><polygon points="472.85,137.23 484.85,130.36 486.35,131.22 474.35,138.10" fill="#c89a68"/><polygon points="478.23,126.55 493.99,135.62 495.49,134.76 479.73,125.69" fill="#dcb07c"/><polygon points="313.53,220.93 329.29,230.00 330.79,229.14 315.03,220.07" fill="#d8a672"/><line x1="313.23" y1="221.10" x2="328.99" y2="230.18" stroke="#5e3b1e" stroke-width="0.55"/><polygon points="334.63,208.84 350.39,217.91 351.89,217.05 336.13,207.98" fill="#d8a672"/><line x1="334.33" y1="209.01" x2="350.09" y2="218.08" stroke="#5e3b1e" stroke-width="0.55"/><polygon points="355.73,196.75 371.49,205.82 372.99,204.96 357.23,195.89" fill="#d8a672"/><line x1="355.43" y1="196.92" x2="371.19" y2="205.99" stroke="#5e3b1e" stroke-width="0.55"/><polygon points="376.83,184.66 392.59,193.73 394.09,192.87 378.33,183.80" fill="#d8a672"/><line x1="376.53" y1="184.83" x2="392.29" y2="193.90" stroke="#5e3b1e" stroke-width="0.55"/><polygon points="397.93,172.56 413.69,181.64 415.19,180.78 399.43,171.70" fill="#d8a672"/><line x1="397.63" y1="172.74" x2="413.39" y2="181.81" stroke="#5e3b1e" stroke-width="0.55"/><polygon points="419.03,160.47 434.79,169.54 436.29,168.69 420.53,159.61" fill="#d8a672"/><line x1="418.73" y1="160.64" x2="434.49" y2="169.72" stroke="#5e3b1e" stroke-width="0.55"/><polygon points="440.13,148.38 455.89,157.45 457.39,156.59 441.63,147.52" fill="#d8a672"/><line x1="439.83" y1="148.55" x2="455.59" y2="157.63" stroke="#5e3b1e" stroke-width="0.55"/><polygon points="461.23,136.29 476.99,145.36 478.49,144.50 462.73,135.43" fill="#d8a672"/><line x1="460.93" y1="136.46" x2="476.69" y2="145.53" stroke="#5e3b1e" stroke-width="0.55"/><polygon points="482.33,124.20 498.09,133.27 499.59,132.41 483.83,123.34" fill="#d8a672"/><line x1="482.03" y1="124.37" x2="497.79" y2="133.44" stroke="#5e3b1e" stroke-width="0.55"/><polygon points="335.29,233.46 351.05,242.53 372.15,230.44 356.39,221.37" fill="#dcc49a"/><polygon points="339.94,234.41 352.55,241.67 371.15,231.01 358.54,223.75" fill="#e8d7b2"/><polygon points="346.91,234.40 358.91,227.53 358.91,241.53 346.91,248.40" fill="#7a4c2a"/><polygon points="346.91,234.40 358.91,227.53 360.41,228.39 348.41,235.27" fill="#c89a68"/><polygon points="352.29,223.71 368.05,232.79 369.55,231.93 353.79,222.86" fill="#dcb07c"/><polygon points="356.39,221.37 372.15,230.44 393.25,218.35 377.49,209.27" fill="#dcc49a"/><polygon points="361.04,222.32 373.65,229.58 392.25,218.92 379.64,211.66" fill="#e8d7b2"/><polygon points="368.01,222.31 380.01,215.43 380.01,229.43 368.01,236.31" fill="#7a4c2a"/><polygon points="368.01,222.31 380.01,215.43 381.51,216.30 369.51,223.17" fill="#c89a68"/><polygon points="373.39,211.62 389.15,220.70 390.65,219.84 374.89,210.76" fill="#dcb07c"/><polygon points="377.49,209.27 393.25,218.35 414.35,206.25 398.59,197.18" fill="#dcc49a"/><polygon points="382.14,210.23 394.75,217.49 413.35,206.83 400.74,199.57" fill="#e8d7b2"/><polygon points="389.11,210.22 401.11,203.34 401.11,217.34 389.11,224.22" fill="#7a4c2a"/><polygon points="389.11,210.22 401.11,203.34 402.61,204.21 390.61,211.08" fill="#c89a68"/><polygon points="394.49,199.53 410.25,208.60 411.75,207.74 395.99,198.67" fill="#dcb07c"/><polygon points="398.59,197.18 414.35,206.25 435.45,194.16 419.69,185.09" fill="#dcc49a"/><polygon points="403.24,198.14 415.85,205.40 434.45,194.74 421.84,187.48" fill="#e8d7b2"/><polygon points="410.21,198.13 422.21,191.25 422.21,205.25 410.21,212.13" fill="#7a4c2a"/><polygon points="410.21,198.13 422.21,191.25 423.71,192.11 411.71,198.99" fill="#c89a68"/><polygon points="415.59,187.44 431.35,196.51 432.85,195.65 417.09,186.58" fill="#dcb07c"/><polygon points="419.69,185.09 435.45,194.16 456.55,182.07 440.79,173.00" fill="#dcc49a"/><polygon points="424.34,186.05 436.95,193.30 455.55,182.64 442.94,175.39" fill="#f8f6f2"/><polygon points="431.31,186.04 443.31,179.16 443.31,193.16 431.31,200.04" fill="#7a4c2a"/><polygon points="431.31,186.04 443.31,179.16 444.81,180.02 432.81,186.90" fill="#c89a68"/><polygon points="436.69,175.35 452.45,184.42 453.95,183.56 438.19,174.49" fill="#dcb07c"/><polygon points="440.79,173.00 456.55,182.07 477.65,169.98 461.89,160.91" fill="#dcc49a"/><polygon points="445.44,173.95 458.05,181.21 476.65,170.55 464.04,163.29" fill="#e8d7b2"/><polygon points="452.41,173.94 464.41,167.07 464.41,181.07 452.41,187.94" fill="#7a4c2a"/><polygon points="452.41,173.94 464.41,167.07 465.91,167.93 453.91,174.81" fill="#c89a68"/><polygon points="457.79,163.26 473.55,172.33 475.05,171.47 459.29,162.40" fill="#dcb07c"/><polygon points="461.89,160.91 477.65,169.98 498.75,157.89 482.99,148.81" fill="#dcc49a"/><polygon points="466.54,161.86 479.15,169.12 497.75,158.46 485.14,151.20" fill="#e8d7b2"/><polygon points="473.51,161.85 485.51,154.98 485.51,168.98 473.51,175.85" fill="#7a4c2a"/><polygon points="473.51,161.85 485.51,154.98 487.01,155.84 475.01,162.72" fill="#c89a68"/><polygon points="478.89,151.16 494.65,160.24 496.15,159.38 480.39,150.30" fill="#dcb07c"/><polygon points="482.99,148.81 498.75,157.89 519.85,145.80 504.09,136.72" fill="#dcc49a"/><polygon points="487.64,149.77 500.25,157.03 518.85,146.37 506.24,139.11" fill="#e8d7b2"/><polygon points="494.61,149.76 506.61,142.88 506.61,156.88 494.61,163.76" fill="#7a4c2a"/><polygon points="494.61,149.76 506.61,142.88 508.11,143.75 496.11,150.62" fill="#c89a68"/><polygon points="499.99,139.07 515.75,148.15 517.25,147.29 501.49,138.21" fill="#dcb07c"/><polygon points="335.29,233.46 351.05,242.53 352.55,241.67 336.79,232.60" fill="#d8a672"/><line x1="334.99" y1="233.63" x2="350.75" y2="242.70" stroke="#5e3b1e" stroke-width="0.55"/><polygon points="356.39,221.37 372.15,230.44 373.65,229.58 357.89,220.51" fill="#d8a672"/><line x1="356.09" y1="221.54" x2="371.85" y2="230.61" stroke="#5e3b1e" stroke-width="0.55"/><polygon points="377.49,209.27 393.25,218.35 394.75,217.49 378.99,208.41" fill="#d8a672"/><line x1="377.19" y1="209.45" x2="392.95" y2="218.52" stroke="#5e3b1e" stroke-width="0.55"/><polygon points="398.59,197.18 414.35,206.25 415.85,205.40 400.09,196.32" fill="#d8a672"/><line x1="398.29" y1="197.35" x2="414.05" y2="206.43" stroke="#5e3b1e" stroke-width="0.55"/><polygon points="419.69,185.09 435.45,194.16 436.95,193.30 421.19,184.23" fill="#d8a672"/><line x1="419.39" y1="185.26" x2="435.15" y2="194.33" stroke="#5e3b1e" stroke-width="0.55"/><polygon points="440.79,173.00 456.55,182.07 458.05,181.21 442.29,172.14" fill="#d8a672"/><line x1="440.49" y1="173.17" x2="456.25" y2="182.24" stroke="#5e3b1e" stroke-width="0.55"/><polygon points="461.89,160.91 477.65,169.98 479.15,169.12 463.39,160.05" fill="#d8a672"/><line x1="461.59" y1="161.08" x2="477.35" y2="170.15" stroke="#5e3b1e" stroke-width="0.55"/><polygon points="482.99,148.81 498.75,157.89 500.25,157.03 484.49,147.96" fill="#d8a672"/><line x1="482.69" y1="148.99" x2="498.45" y2="158.06" stroke="#5e3b1e" stroke-width="0.55"/><polygon points="504.09,136.72 519.85,145.80 521.35,144.94 505.59,135.86" fill="#d8a672"/><line x1="503.79" y1="136.90" x2="519.55" y2="145.97" stroke="#5e3b1e" stroke-width="0.55"/><polygon points="357.05,245.98 372.82,255.06 393.92,242.96 378.15,233.89" fill="#dcc49a"/><polygon points="361.71,246.94 374.32,254.20 392.92,243.54 380.31,236.28" fill="#e8d7b2"/><polygon points="368.67,246.93 380.67,240.05 380.67,254.05 368.67,260.93" fill="#7a4c2a"/><polygon points="368.67,246.93 380.67,240.05 382.17,240.91 370.17,247.79" fill="#c89a68"/><polygon points="374.05,236.24 389.82,245.31 391.32,244.45 375.55,235.38" fill="#dcb07c"/><polygon points="378.15,233.89 393.92,242.96 415.02,230.87 399.25,221.80" fill="#dcc49a"/><polygon points="382.81,234.85 395.42,242.10 414.02,231.45 401.41,224.19" fill="#e8d7b2"/><polygon points="389.77,234.84 401.77,227.96 401.77,241.96 389.77,248.84" fill="#7a4c2a"/><polygon points="389.77,234.84 401.77,227.96 403.27,228.82 391.27,235.70" fill="#c89a68"/><polygon points="395.15,224.15 410.92,233.22 412.42,232.36 396.65,223.29" fill="#dcb07c"/><polygon points="399.25,221.80 415.02,230.87 436.12,218.78 420.35,209.71" fill="#dcc49a"/><polygon points="403.91,222.75 416.52,230.01 435.12,219.35 422.51,212.10" fill="#e8d7b2"/><polygon points="410.87,222.75 422.87,215.87 422.87,229.87 410.87,236.75" fill="#7a4c2a"/><polygon points="410.87,222.75 422.87,215.87 424.37,216.73 412.37,223.61" fill="#c89a68"/><polygon points="416.25,212.06 432.02,221.13 433.52,220.27 417.75,211.20" fill="#dcb07c"/><polygon points="420.35,209.71 436.12,218.78 457.22,206.69 441.45,197.62" fill="#dcc49a"/><polygon points="425.01,210.66 437.62,217.92 456.22,207.26 443.61,200.00" fill="#e8d7b2"/><polygon points="431.97,210.65 443.97,203.78 443.97,217.78 431.97,224.65" fill="#7a4c2a"/><polygon points="431.97,210.65 443.97,203.78 445.47,204.64 433.47,211.52" fill="#c89a68"/><polygon points="437.35,199.97 453.12,209.04 454.62,208.18 438.85,199.11" fill="#dcb07c"/><polygon points="441.45,197.62 457.22,206.69 478.32,194.60 462.55,185.52" fill="#dcc49a"/><polygon points="446.11,198.57 458.72,205.83 477.32,195.17 464.71,187.91" fill="#e8d7b2"/><polygon points="453.07,198.56 465.07,191.68 465.07,205.68 453.07,212.56" fill="#7a4c2a"/><polygon points="453.07,198.56 465.07,191.68 466.57,192.55 454.57,199.43" fill="#c89a68"/><polygon points="458.45,187.87 474.22,196.95 475.72,196.09 459.95,187.01" fill="#dcb07c"/><polygon points="462.55,185.52 478.32,194.60 499.42,182.51 483.65,173.43" fill="#dcc49a"/><polygon points="467.21,186.48 479.82,193.74 498.42,183.08 485.81,175.82" fill="#e8d7b2"/><polygon points="474.17,186.47 486.17,179.59 486.17,193.59 474.17,200.47" fill="#7a4c2a"/><polygon points="474.17,186.47 486.17,179.59 487.67,180.46 475.67,187.33" fill="#c89a68"/><polygon points="479.55,175.78 495.32,184.86 496.82,184.00 481.05,174.92" fill="#dcb07c"/><polygon points="483.65,173.43 499.42,182.51 520.52,170.41 504.75,161.34" fill="#dcc49a"/><polygon points="488.31,174.39 500.92,181.65 519.52,170.99 506.91,163.73" fill="#e8d7b2"/><polygon points="495.27,174.38 507.27,167.50 507.27,181.50 495.27,188.38" fill="#7a4c2a"/><polygon points="495.27,174.38 507.27,167.50 508.77,168.36 496.77,175.24" fill="#c89a68"/><polygon points="500.65,163.69 516.42,172.76 517.92,171.90 502.15,162.83" fill="#dcb07c"/><polygon points="504.75,161.34 520.52,170.41 541.62,158.32 525.85,149.25" fill="#dcc49a"/><polygon points="509.41,162.30 522.02,169.55 540.62,158.90 528.01,151.64" fill="#e8d7b2"/><polygon points="516.37,162.29 528.37,155.41 528.37,169.41 516.37,176.29" fill="#7a4c2a"/><polygon points="516.37,162.29 528.37,155.41 529.87,156.27 517.87,163.15" fill="#c89a68"/><polygon points="521.75,151.60 537.52,160.67 539.02,159.81 523.25,150.74" fill="#dcb07c"/><polygon points="357.05,245.98 372.82,255.06 374.32,254.20 358.55,245.12" fill="#d8a672"/><line x1="356.75" y1="246.16" x2="372.52" y2="255.23" stroke="#5e3b1e" stroke-width="0.55"/><polygon points="378.15,233.89 393.92,242.96 395.42,242.10 379.65,233.03" fill="#d8a672"/><line x1="377.85" y1="234.06" x2="393.62" y2="243.14" stroke="#5e3b1e" stroke-width="0.55"/><polygon points="399.25,221.80 415.02,230.87 416.52,230.01 400.75,220.94" fill="#d8a672"/><line x1="398.95" y1="221.97" x2="414.72" y2="231.04" stroke="#5e3b1e" stroke-width="0.55"/><polygon points="420.35,209.71 436.12,218.78 437.62,217.92 421.85,208.85" fill="#d8a672"/><line x1="420.05" y1="209.88" x2="435.82" y2="218.95" stroke="#5e3b1e" stroke-width="0.55"/><polygon points="441.45,197.62 457.22,206.69 458.72,205.83 442.95,196.76" fill="#d8a672"/><line x1="441.15" y1="197.79" x2="456.92" y2="206.86" stroke="#5e3b1e" stroke-width="0.55"/><polygon points="462.55,185.52 478.32,194.60 479.82,193.74 464.05,184.67" fill="#d8a672"/><line x1="462.25" y1="185.70" x2="478.02" y2="194.77" stroke="#5e3b1e" stroke-width="0.55"/><polygon points="483.65,173.43 499.42,182.51 500.92,181.65 485.15,172.57" fill="#d8a672"/><line x1="483.35" y1="173.60" x2="499.12" y2="182.68" stroke="#5e3b1e" stroke-width="0.55"/><polygon points="504.75,161.34 520.52,170.41 522.02,169.55 506.25,160.48" fill="#d8a672"/><line x1="504.45" y1="161.51" x2="520.22" y2="170.59" stroke="#5e3b1e" stroke-width="0.55"/><polygon points="525.85,149.25 541.62,158.32 543.12,157.46 527.35,148.39" fill="#d8a672"/><line x1="525.55" y1="149.42" x2="541.32" y2="158.49" stroke="#5e3b1e" stroke-width="0.55"/><polygon points="382.82,258.06 396.18,265.75 403.73,261.42 390.37,253.73" fill="#e5c17a"/><line x1="382.82" y1="258.06" x2="390.37" y2="253.73" stroke="#8a5a30" stroke-width="0.5"/><polygon points="393.37,252.01 406.73,259.70 414.28,255.37 400.92,247.68" fill="#e5c17a"/><line x1="393.37" y1="252.01" x2="400.92" y2="247.68" stroke="#8a5a30" stroke-width="0.5"/><polygon points="403.92,245.96 417.28,253.65 424.83,249.33 411.47,241.64" fill="#e5c17a"/><line x1="403.92" y1="245.96" x2="411.47" y2="241.64" stroke="#8a5a30" stroke-width="0.5"/><polygon points="414.47,239.92 427.83,247.61 435.38,243.28 422.02,235.59" fill="#e5c17a"/><line x1="414.47" y1="239.92" x2="422.02" y2="235.59" stroke="#8a5a30" stroke-width="0.5"/><polygon points="425.02,233.87 438.38,241.56 445.93,237.24 432.57,229.54" fill="#e5c17a"/><line x1="425.02" y1="233.87" x2="432.57" y2="229.54" stroke="#8a5a30" stroke-width="0.5"/><polygon points="435.57,227.83 448.93,235.52 456.48,231.19 443.12,223.50" fill="#e5c17a"/><line x1="435.57" y1="227.83" x2="443.12" y2="223.50" stroke="#8a5a30" stroke-width="0.5"/><polygon points="450.99,221.19 459.30,225.98 467.41,224.10 470.69,219.45 462.38,214.66 455.35,217.16" fill="#8c8679"/><polygon points="446.62,222.53 450.62,220.23 450.62,230.23 446.62,232.53" fill="#7a4c2a"/><line x1="466.22" y1="214.17" x2="466.22" y2="222.17" stroke="#6a4224" stroke-width="1.2"/><polygon points="460.02,211.98 475.78,221.05 476.98,220.36 461.22,211.29" fill="#dcae7a"/><polygon points="472.09,209.10 480.40,213.88 488.51,212.01 491.79,207.35 483.48,202.57 476.45,205.07" fill="#8c8679"/><polygon points="467.72,210.44 471.72,208.14 471.72,218.14 467.72,220.44" fill="#7a4c2a"/><line x1="487.32" y1="202.08" x2="487.32" y2="210.08" stroke="#6a4224" stroke-width="1.2"/><polygon points="481.12,199.88 496.88,208.96 498.08,208.27 482.32,199.20" fill="#dcae7a"/><polygon points="493.19,197.01 501.50,201.79 509.61,199.92 512.89,195.26 504.58,190.48 497.55,192.97" fill="#8c8679"/><polygon points="488.82,198.34 492.82,196.05 492.82,206.05 488.82,208.34" fill="#7a4c2a"/><line x1="508.42" y1="189.98" x2="508.42" y2="197.98" stroke="#6a4224" stroke-width="1.2"/><polygon points="502.22,187.79 517.98,196.87 519.18,196.18 503.42,187.11" fill="#dcae7a"/><polygon points="514.29,184.92 522.60,189.70 530.71,187.82 533.99,183.17 525.68,178.39 518.65,180.88" fill="#8c8679"/><polygon points="509.92,186.25 513.92,183.96 513.92,193.96 509.92,196.25" fill="#7a4c2a"/><line x1="529.52" y1="177.89" x2="529.52" y2="185.89" stroke="#6a4224" stroke-width="1.2"/><polygon points="523.32,175.70 539.08,184.77 540.28,184.09 524.52,175.01" fill="#dcae7a"/><polygon points="535.39,172.83 543.70,177.61 551.81,175.73 555.09,171.08 546.78,166.30 539.75,168.79" fill="#8c8679"/><polygon points="531.02,174.16 535.02,171.87 535.02,181.87 531.02,184.16" fill="#7a4c2a"/><line x1="550.62" y1="165.80" x2="550.62" y2="173.80" stroke="#6a4224" stroke-width="1.2"/><polygon points="544.42,163.61 560.18,172.68 561.38,171.99 545.62,162.92" fill="#dcae7a"/><polygon points="378.82,258.51 394.58,267.58 396.08,266.72 380.32,257.65" fill="#d8a672"/><line x1="378.52" y1="258.68" x2="394.28" y2="267.75" stroke="#5e3b1e" stroke-width="0.55"/><polygon points="389.37,252.46 405.13,261.54 406.63,260.68 390.87,251.60" fill="#d8a672"/><line x1="389.07" y1="252.64" x2="404.83" y2="261.71" stroke="#5e3b1e" stroke-width="0.55"/><polygon points="399.92,246.42 415.68,255.49 417.18,254.63 401.42,245.56" fill="#d8a672"/><line x1="399.62" y1="246.59" x2="415.38" y2="255.66" stroke="#5e3b1e" stroke-width="0.55"/><polygon points="410.47,240.37 426.23,249.44 427.73,248.59 411.97,239.51" fill="#d8a672"/><line x1="410.17" y1="240.54" x2="425.93" y2="249.62" stroke="#5e3b1e" stroke-width="0.55"/><polygon points="421.02,234.33 436.78,243.40 438.28,242.54 422.52,233.47" fill="#d8a672"/><line x1="420.72" y1="234.50" x2="436.48" y2="243.57" stroke="#5e3b1e" stroke-width="0.55"/><polygon points="431.57,228.28 447.33,237.35 448.83,236.49 433.07,227.42" fill="#d8a672"/><line x1="431.27" y1="228.45" x2="447.03" y2="237.53" stroke="#5e3b1e" stroke-width="0.55"/><polygon points="442.12,222.23 457.88,231.31 459.38,230.45 443.62,221.37" fill="#d8a672"/><line x1="441.82" y1="222.41" x2="457.58" y2="231.48" stroke="#5e3b1e" stroke-width="0.55"/><polygon points="452.67,216.19 468.43,225.26 469.63,224.57 453.87,215.50" fill="#d7a672"/><polygon points="463.22,210.14 478.98,219.22 480.48,218.36 464.72,209.28" fill="#d8a672"/><line x1="462.92" y1="210.31" x2="478.68" y2="219.39" stroke="#5e3b1e" stroke-width="0.55"/><polygon points="473.77,204.10 489.53,213.17 490.73,212.48 474.97,203.41" fill="#d7a672"/><polygon points="484.32,198.05 500.08,207.12 501.58,206.26 485.82,197.19" fill="#d8a672"/><line x1="484.02" y1="198.22" x2="499.78" y2="207.30" stroke="#5e3b1e" stroke-width="0.55"/><polygon points="494.87,192.01 510.63,201.08 511.83,200.39 496.07,191.32" fill="#d7a672"/><polygon points="505.42,185.96 521.18,195.03 522.68,194.17 506.92,185.10" fill="#d8a672"/><line x1="505.12" y1="186.13" x2="520.88" y2="195.20" stroke="#5e3b1e" stroke-width="0.55"/><polygon points="515.97,179.91 531.73,188.99 532.93,188.30 517.17,179.23" fill="#d7a672"/><polygon points="526.52,173.87 542.28,182.94 543.78,182.08 528.02,173.01" fill="#d8a672"/><line x1="526.22" y1="174.04" x2="541.98" y2="183.11" stroke="#5e3b1e" stroke-width="0.55"/><polygon points="537.07,167.82 552.83,176.89 554.03,176.21 538.27,167.13" fill="#d7a672"/><polygon points="547.62,161.78 563.38,170.85 564.88,169.99 549.12,160.92" fill="#d8a672"/><line x1="547.32" y1="161.95" x2="563.08" y2="171.02" stroke="#5e3b1e" stroke-width="0.55"/><polygon points="404.58,270.58 417.94,278.27 425.49,273.95 412.13,266.25" fill="#e5c17a"/><line x1="404.58" y1="270.58" x2="412.13" y2="266.25" stroke="#8a5a30" stroke-width="0.5"/><polygon points="415.13,264.54 428.49,272.23 436.04,267.90 422.68,260.21" fill="#e5c17a"/><line x1="415.13" y1="264.54" x2="422.68" y2="260.21" stroke="#8a5a30" stroke-width="0.5"/><polygon points="425.68,258.49 439.04,266.18 446.59,261.85 433.23,254.16" fill="#e5c17a"/><line x1="425.68" y1="258.49" x2="433.23" y2="254.16" stroke="#8a5a30" stroke-width="0.5"/><polygon points="436.23,252.44 449.59,260.14 457.14,255.81 443.78,248.12" fill="#e5c17a"/><line x1="436.23" y1="252.44" x2="443.78" y2="248.12" stroke="#8a5a30" stroke-width="0.5"/><polygon points="446.78,246.40 460.14,254.09 467.69,249.76 454.33,242.07" fill="#e5c17a"/><line x1="446.78" y1="246.40" x2="454.33" y2="242.07" stroke="#8a5a30" stroke-width="0.5"/><polygon points="457.33,240.35 470.69,248.04 478.24,243.72 464.88,236.03" fill="#e5c17a"/><line x1="457.33" y1="240.35" x2="464.88" y2="236.03" stroke="#8a5a30" stroke-width="0.5"/><polygon points="472.75,233.72 481.06,238.50 489.17,236.63 492.46,231.97 484.15,227.19 477.11,229.68" fill="#8c8679"/><polygon points="468.38,235.05 472.38,232.76 472.38,242.76 468.38,245.05" fill="#7a4c2a"/><line x1="487.98" y1="226.69" x2="487.98" y2="234.69" stroke="#6a4224" stroke-width="1.2"/><polygon points="481.78,224.50 497.54,233.58 498.74,232.89 482.98,223.82" fill="#dcae7a"/><polygon points="493.85,221.63 502.16,226.41 510.27,224.53 513.56,219.88 505.25,215.10 498.21,217.59" fill="#8c8679"/><polygon points="489.48,222.96 493.48,220.67 493.48,230.67 489.48,232.96" fill="#7a4c2a"/><line x1="509.08" y1="214.60" x2="509.08" y2="222.60" stroke="#6a4224" stroke-width="1.2"/><polygon points="502.88,212.41 518.64,221.48 519.84,220.80 504.08,211.72" fill="#dcae7a"/><polygon points="514.95,209.54 523.26,214.32 531.37,212.44 534.66,207.79 526.35,203.01 519.31,205.50" fill="#8c8679"/><polygon points="510.58,210.87 514.58,208.58 514.58,218.58 510.58,220.87" fill="#7a4c2a"/><line x1="530.18" y1="202.51" x2="530.18" y2="210.51" stroke="#6a4224" stroke-width="1.2"/><polygon points="523.98,200.32 539.74,209.39 540.94,208.70 525.18,199.63" fill="#dcae7a"/><polygon points="536.05,197.45 544.36,202.23 552.47,200.35 555.76,195.70 547.45,190.92 540.41,193.41" fill="#8c8679"/><polygon points="531.68,198.78 535.68,196.49 535.68,206.49 531.68,208.78" fill="#7a4c2a"/><line x1="551.28" y1="190.42" x2="551.28" y2="198.42" stroke="#6a4224" stroke-width="1.2"/><polygon points="545.08,188.23 560.84,197.30 562.04,196.61 546.28,187.54" fill="#dcae7a"/><polygon points="557.15,185.35 565.46,190.13 573.57,188.26 576.86,183.61 568.55,178.82 561.51,181.32" fill="#8c8679"/><polygon points="552.78,186.69 556.78,184.39 556.78,194.39 552.78,196.69" fill="#7a4c2a"/><line x1="572.38" y1="178.33" x2="572.38" y2="186.33" stroke="#6a4224" stroke-width="1.2"/><polygon points="566.18,176.14 581.94,185.21 583.14,184.52 567.38,175.45" fill="#dcae7a"/><polygon points="400.58,271.04 416.34,280.11 417.84,279.25 402.08,270.18" fill="#d8a672"/><line x1="400.28" y1="271.21" x2="416.04" y2="280.28" stroke="#5e3b1e" stroke-width="0.55"/><polygon points="411.13,264.99 426.89,274.06 428.39,273.20 412.63,264.13" fill="#d8a672"/><line x1="410.83" y1="265.16" x2="426.59" y2="274.23" stroke="#5e3b1e" stroke-width="0.55"/><polygon points="421.68,258.94 437.44,268.02 438.94,267.16 423.18,258.08" fill="#d8a672"/><line x1="421.38" y1="259.12" x2="437.14" y2="268.19" stroke="#5e3b1e" stroke-width="0.55"/><polygon points="432.23,252.90 447.99,261.97 449.49,261.11 433.73,252.04" fill="#d8a672"/><line x1="431.93" y1="253.07" x2="447.69" y2="262.14" stroke="#5e3b1e" stroke-width="0.55"/><polygon points="442.78,246.85 458.54,255.93 460.04,255.07 444.28,245.99" fill="#d8a672"/><line x1="442.48" y1="247.02" x2="458.24" y2="256.10" stroke="#5e3b1e" stroke-width="0.55"/><polygon points="453.33,240.81 469.09,249.88 470.59,249.02 454.83,239.95" fill="#d8a672"/><line x1="453.03" y1="240.98" x2="468.79" y2="250.05" stroke="#5e3b1e" stroke-width="0.55"/><polygon points="463.88,234.76 479.64,243.83 481.14,242.97 465.38,233.90" fill="#d8a672"/><line x1="463.58" y1="234.93" x2="479.34" y2="244.01" stroke="#5e3b1e" stroke-width="0.55"/><polygon points="474.43,228.71 490.19,237.79 491.39,237.10 475.63,228.03" fill="#d7a672"/><polygon points="484.98,222.67 500.74,231.74 502.24,230.88 486.48,221.81" fill="#d8a672"/><line x1="484.68" y1="222.84" x2="500.44" y2="231.91" stroke="#5e3b1e" stroke-width="0.55"/><polygon points="495.53,216.62 511.29,225.70 512.49,225.01 496.73,215.94" fill="#d7a672"/><polygon points="506.08,210.58 521.84,219.65 523.34,218.79 507.58,209.72" fill="#d8a672"/><line x1="505.78" y1="210.75" x2="521.54" y2="219.82" stroke="#5e3b1e" stroke-width="0.55"/><polygon points="516.63,204.53 532.39,213.60 533.59,212.92 517.83,203.84" fill="#d7a672"/><polygon points="527.18,198.49 542.94,207.56 544.44,206.70 528.68,197.63" fill="#d8a672"/><line x1="526.88" y1="198.66" x2="542.64" y2="207.73" stroke="#5e3b1e" stroke-width="0.55"/><polygon points="537.73,192.44 553.49,201.51 554.69,200.82 538.93,191.75" fill="#d7a672"/><polygon points="548.28,186.39 564.04,195.47 565.54,194.61 549.78,185.53" fill="#d8a672"/><line x1="547.98" y1="186.57" x2="563.74" y2="195.64" stroke="#5e3b1e" stroke-width="0.55"/><polygon points="558.83,180.35 574.59,189.42 575.79,188.73 560.03,179.66" fill="#d7a672"/><polygon points="569.38,174.30 585.14,183.38 586.64,182.52 570.88,173.44" fill="#d8a672"/><line x1="569.08" y1="174.47" x2="584.84" y2="183.55" stroke="#5e3b1e" stroke-width="0.55"/><polygon points="426.34,283.11 439.71,290.80 447.26,286.47 433.89,278.78" fill="#e5c17a"/><line x1="426.34" y1="283.11" x2="433.89" y2="278.78" stroke="#8a5a30" stroke-width="0.5"/><polygon points="436.89,277.06 450.26,284.75 457.81,280.43 444.44,272.74" fill="#e5c17a"/><line x1="436.89" y1="277.06" x2="444.44" y2="272.74" stroke="#8a5a30" stroke-width="0.5"/><polygon points="447.44,271.02 460.81,278.71 468.36,274.38 454.99,266.69" fill="#e5c17a"/><line x1="447.44" y1="271.02" x2="454.99" y2="266.69" stroke="#8a5a30" stroke-width="0.5"/><polygon points="457.99,264.97 471.36,272.66 478.91,268.33 465.54,260.64" fill="#e5c17a"/><line x1="457.99" y1="264.97" x2="465.54" y2="260.64" stroke="#8a5a30" stroke-width="0.5"/><polygon points="468.54,258.92 481.91,266.62 489.46,262.29 476.09,254.60" fill="#e5c17a"/><line x1="468.54" y1="258.92" x2="476.09" y2="254.60" stroke="#8a5a30" stroke-width="0.5"/><polygon points="479.09,252.88 492.46,260.57 500.01,256.24 486.64,248.55" fill="#e5c17a"/><line x1="479.09" y1="252.88" x2="486.64" y2="248.55" stroke="#8a5a30" stroke-width="0.5"/><polygon points="494.52,246.25 502.82,251.03 510.93,249.15 514.22,244.50 505.91,239.72 498.87,242.21" fill="#8c8679"/><polygon points="490.14,247.58 494.14,245.29 494.14,255.29 490.14,257.58" fill="#7a4c2a"/><line x1="509.74" y1="239.22" x2="509.74" y2="247.22" stroke="#6a4224" stroke-width="1.2"/><polygon points="503.54,237.03 519.31,246.10 520.51,245.41 504.74,236.34" fill="#dcae7a"/><polygon points="515.62,234.15 523.92,238.94 532.03,237.06 535.32,232.41 527.01,227.63 519.97,230.12" fill="#8c8679"/><polygon points="511.24,235.49 515.24,233.20 515.24,243.20 511.24,245.49" fill="#7a4c2a"/><line x1="530.84" y1="227.13" x2="530.84" y2="235.13" stroke="#6a4224" stroke-width="1.2"/><polygon points="524.64,224.94 540.41,234.01 541.61,233.32 525.84,224.25" fill="#dcae7a"/><polygon points="536.72,222.06 545.02,226.84 553.13,224.97 556.42,220.32 548.11,215.53 541.07,218.03" fill="#8c8679"/><polygon points="532.34,223.40 536.34,221.10 536.34,231.10 532.34,233.40" fill="#7a4c2a"/><line x1="551.94" y1="215.04" x2="551.94" y2="223.04" stroke="#6a4224" stroke-width="1.2"/><polygon points="545.74,212.85 561.51,221.92 562.71,221.23 546.94,212.16" fill="#dcae7a"/><polygon points="557.82,209.97 566.12,214.75 574.23,212.88 577.52,208.22 569.21,203.44 562.17,205.94" fill="#8c8679"/><polygon points="553.44,211.30 557.44,209.01 557.44,219.01 553.44,221.30" fill="#7a4c2a"/><line x1="573.04" y1="202.94" x2="573.04" y2="210.94" stroke="#6a4224" stroke-width="1.2"/><polygon points="566.84,200.75 582.61,209.83 583.81,209.14 568.04,200.07" fill="#dcae7a"/><polygon points="578.92,197.88 587.22,202.66 595.33,200.78 598.62,196.13 590.31,191.35 583.27,193.84" fill="#8c8679"/><polygon points="574.54,199.21 578.54,196.92 578.54,206.92 574.54,209.21" fill="#7a4c2a"/><line x1="594.14" y1="190.85" x2="594.14" y2="198.85" stroke="#6a4224" stroke-width="1.2"/><polygon points="587.94,188.66 603.71,197.74 604.91,197.05 589.14,187.97" fill="#dcae7a"/><polygon points="422.34,283.56 438.11,292.63 439.61,291.78 423.84,282.70" fill="#d8a672"/><line x1="422.04" y1="283.73" x2="437.81" y2="292.81" stroke="#5e3b1e" stroke-width="0.55"/><polygon points="432.89,277.52 448.66,286.59 450.16,285.73 434.39,276.66" fill="#d8a672"/><line x1="432.59" y1="277.69" x2="448.36" y2="286.76" stroke="#5e3b1e" stroke-width="0.55"/><polygon points="443.44,271.47 459.21,280.54 460.71,279.68 444.94,270.61" fill="#d8a672"/><line x1="443.14" y1="271.64" x2="458.91" y2="280.72" stroke="#5e3b1e" stroke-width="0.55"/><polygon points="453.99,265.42 469.76,274.50 471.26,273.64 455.49,264.56" fill="#d8a672"/><line x1="453.69" y1="265.60" x2="469.46" y2="274.67" stroke="#5e3b1e" stroke-width="0.55"/><polygon points="464.54,259.38 480.31,268.45 481.81,267.59 466.04,258.52" fill="#d8a672"/><line x1="464.24" y1="259.55" x2="480.01" y2="268.62" stroke="#5e3b1e" stroke-width="0.55"/><polygon points="475.09,253.33 490.86,262.41 492.36,261.55 476.59,252.47" fill="#d8a672"/><line x1="474.79" y1="253.50" x2="490.56" y2="262.58" stroke="#5e3b1e" stroke-width="0.55"/><polygon points="485.64,247.29 501.41,256.36 502.91,255.50 487.14,246.43" fill="#d8a672"/><line x1="485.34" y1="247.46" x2="501.11" y2="256.53" stroke="#5e3b1e" stroke-width="0.55"/><polygon points="496.19,241.24 511.96,250.31 513.16,249.63 497.39,240.55" fill="#d7a672"/><polygon points="506.74,235.20 522.51,244.27 524.01,243.41 508.24,234.34" fill="#d8a672"/><line x1="506.44" y1="235.37" x2="522.21" y2="244.44" stroke="#5e3b1e" stroke-width="0.55"/><polygon points="517.29,229.15 533.06,238.22 534.26,237.53 518.49,228.46" fill="#d7a672"/><polygon points="527.84,223.10 543.61,232.18 545.11,231.32 529.34,222.24" fill="#d8a672"/><line x1="527.54" y1="223.28" x2="543.31" y2="232.35" stroke="#5e3b1e" stroke-width="0.55"/><polygon points="538.39,217.06 554.16,226.13 555.36,225.44 539.59,216.37" fill="#d7a672"/><polygon points="548.94,211.01 564.71,220.08 566.21,219.23 550.44,210.15" fill="#d8a672"/><line x1="548.64" y1="211.18" x2="564.41" y2="220.26" stroke="#5e3b1e" stroke-width="0.55"/><polygon points="559.49,204.97 575.26,214.04 576.46,213.35 560.69,204.28" fill="#d7a672"/><polygon points="570.04,198.92 585.81,207.99 587.31,207.13 571.54,198.06" fill="#d8a672"/><line x1="569.74" y1="199.09" x2="585.51" y2="208.17" stroke="#5e3b1e" stroke-width="0.55"/><polygon points="580.59,192.87 596.36,201.95 597.56,201.26 581.79,192.19" fill="#d7a672"/><polygon points="591.14,186.83 606.91,195.90 608.41,195.04 592.64,185.97" fill="#d8a672"/><line x1="590.84" y1="187.00" x2="606.61" y2="196.07" stroke="#5e3b1e" stroke-width="0.55"/><polygon points="448.11,295.63 461.47,303.33 469.02,299.00 455.66,291.31" fill="#e5c17a"/><line x1="448.11" y1="295.63" x2="455.66" y2="291.31" stroke="#8a5a30" stroke-width="0.5"/><polygon points="458.66,289.59 472.02,297.28 479.57,292.95 466.21,285.26" fill="#e5c17a"/><line x1="458.66" y1="289.59" x2="466.21" y2="285.26" stroke="#8a5a30" stroke-width="0.5"/><polygon points="469.21,283.54 482.57,291.23 490.12,286.91 476.76,279.22" fill="#e5c17a"/><line x1="469.21" y1="283.54" x2="476.76" y2="279.22" stroke="#8a5a30" stroke-width="0.5"/><polygon points="479.76,277.50 493.12,285.19 500.67,280.86 487.31,273.17" fill="#e5c17a"/><line x1="479.76" y1="277.50" x2="487.31" y2="273.17" stroke="#8a5a30" stroke-width="0.5"/><polygon points="490.31,271.45 503.67,279.14 511.22,274.82 497.86,267.12" fill="#e5c17a"/><line x1="490.31" y1="271.45" x2="497.86" y2="267.12" stroke="#8a5a30" stroke-width="0.5"/><polygon points="500.86,265.40 514.22,273.10 521.77,268.77 508.41,261.08" fill="#e5c17a"/><line x1="500.86" y1="265.40" x2="508.41" y2="261.08" stroke="#8a5a30" stroke-width="0.5"/><polygon points="516.28,258.77 524.59,263.55 532.70,261.68 535.98,257.02 527.67,252.24 520.64,254.74" fill="#8c8679"/><polygon points="511.91,260.11 515.91,257.81 515.91,267.81 511.91,270.11" fill="#7a4c2a"/><line x1="531.51" y1="251.75" x2="531.51" y2="259.75" stroke="#6a4224" stroke-width="1.2"/><polygon points="525.31,249.56 541.07,258.63 542.27,257.94 526.51,248.87" fill="#dcae7a"/><polygon points="537.38,246.68 545.69,251.46 553.80,249.59 557.08,244.93 548.77,240.15 541.74,242.65" fill="#8c8679"/><polygon points="533.01,248.01 537.01,245.72 537.01,255.72 533.01,258.01" fill="#7a4c2a"/><line x1="552.61" y1="239.65" x2="552.61" y2="247.65" stroke="#6a4224" stroke-width="1.2"/><polygon points="546.41,237.46 562.17,246.54 563.37,245.85 547.61,236.78" fill="#dcae7a"/><polygon points="558.48,234.59 566.79,239.37 574.90,237.49 578.18,232.84 569.87,228.06 562.84,230.55" fill="#8c8679"/><polygon points="554.11,235.92 558.11,233.63 558.11,243.63 554.11,245.92" fill="#7a4c2a"/><line x1="573.71" y1="227.56" x2="573.71" y2="235.56" stroke="#6a4224" stroke-width="1.2"/><polygon points="567.51,225.37 583.27,234.44 584.47,233.76 568.71,224.68" fill="#dcae7a"/><polygon points="579.58,222.50 587.89,227.28 596.00,225.40 599.28,220.75 590.97,215.97 583.94,218.46" fill="#8c8679"/><polygon points="575.21,223.83 579.21,221.54 579.21,231.54 575.21,233.83" fill="#7a4c2a"/><line x1="594.81" y1="215.47" x2="594.81" y2="223.47" stroke="#6a4224" stroke-width="1.2"/><polygon points="588.61,213.28 604.37,222.35 605.57,221.67 589.81,212.59" fill="#dcae7a"/><polygon points="600.68,210.41 608.99,215.19 617.10,213.31 620.38,208.66 612.07,203.88 605.04,206.37" fill="#8c8679"/><polygon points="596.31,211.74 600.31,209.45 600.31,219.45 596.31,221.74" fill="#7a4c2a"/><line x1="615.91" y1="203.38" x2="615.91" y2="211.38" stroke="#6a4224" stroke-width="1.2"/><polygon points="609.71,201.19 625.47,210.26 626.67,209.57 610.91,200.50" fill="#dcae7a"/><polygon points="444.11,296.09 459.87,305.16 461.37,304.30 445.61,295.23" fill="#d8a672"/><line x1="443.81" y1="296.26" x2="459.57" y2="305.33" stroke="#5e3b1e" stroke-width="0.55"/><polygon points="454.66,290.04 470.42,299.12 471.92,298.26 456.16,289.18" fill="#d8a672"/><line x1="454.36" y1="290.21" x2="470.12" y2="299.29" stroke="#5e3b1e" stroke-width="0.55"/><polygon points="465.21,284.00 480.97,293.07 482.47,292.21 466.71,283.14" fill="#d8a672"/><line x1="464.91" y1="284.17" x2="480.67" y2="293.24" stroke="#5e3b1e" stroke-width="0.55"/><polygon points="475.76,277.95 491.52,287.02 493.02,286.16 477.26,277.09" fill="#d8a672"/><line x1="475.46" y1="278.12" x2="491.22" y2="287.20" stroke="#5e3b1e" stroke-width="0.55"/><polygon points="486.31,271.91 502.07,280.98 503.57,280.12 487.81,271.05" fill="#d8a672"/><line x1="486.01" y1="272.08" x2="501.77" y2="281.15" stroke="#5e3b1e" stroke-width="0.55"/><polygon points="496.86,265.86 512.62,274.93 514.12,274.07 498.36,265.00" fill="#d8a672"/><line x1="496.56" y1="266.03" x2="512.32" y2="275.10" stroke="#5e3b1e" stroke-width="0.55"/><polygon points="507.41,259.81 523.17,268.89 524.67,268.03 508.91,258.95" fill="#d8a672"/><line x1="507.11" y1="259.99" x2="522.87" y2="269.06" stroke="#5e3b1e" stroke-width="0.55"/><polygon points="517.96,253.77 533.72,262.84 534.92,262.15 519.16,253.08" fill="#d7a672"/><polygon points="528.51,247.72 544.27,256.79 545.77,255.93 530.01,246.86" fill="#d8a672"/><line x1="528.21" y1="247.89" x2="543.97" y2="256.97" stroke="#5e3b1e" stroke-width="0.55"/><polygon points="539.06,241.68 554.82,250.75 556.02,250.06 540.26,240.99" fill="#d7a672"/><polygon points="549.61,235.63 565.37,244.70 566.87,243.84 551.11,234.77" fill="#d8a672"/><line x1="549.31" y1="235.80" x2="565.07" y2="244.87" stroke="#5e3b1e" stroke-width="0.55"/><polygon points="560.16,229.58 575.92,238.66 577.12,237.97 561.36,228.90" fill="#d7a672"/><polygon points="570.71,223.54 586.47,232.61 587.97,231.75 572.21,222.68" fill="#d8a672"/><line x1="570.41" y1="223.71" x2="586.17" y2="232.78" stroke="#5e3b1e" stroke-width="0.55"/><polygon points="581.26,217.49 597.02,226.57 598.22,225.88 582.46,216.80" fill="#d7a672"/><polygon points="591.81,211.45 607.57,220.52 609.07,219.66 593.31,210.59" fill="#d8a672"/><line x1="591.51" y1="211.62" x2="607.27" y2="220.69" stroke="#5e3b1e" stroke-width="0.55"/><polygon points="602.36,205.40 618.12,214.47 619.32,213.79 603.56,204.71" fill="#d7a672"/><polygon points="612.91,199.35 628.67,208.43 630.17,207.57 614.41,198.50" fill="#d8a672"/><line x1="612.61" y1="199.53" x2="628.37" y2="208.60" stroke="#5e3b1e" stroke-width="0.55"/><polygon points="469.87,308.16 483.23,315.85 490.78,311.53 477.42,303.83" fill="#e5c17a"/><line x1="469.87" y1="308.16" x2="477.42" y2="303.83" stroke="#8a5a30" stroke-width="0.5"/><polygon points="480.42,302.11 493.78,309.81 501.33,305.48 487.97,297.79" fill="#e5c17a"/><line x1="480.42" y1="302.11" x2="487.97" y2="297.79" stroke="#8a5a30" stroke-width="0.5"/><polygon points="490.97,296.07 504.33,303.76 511.88,299.43 498.52,291.74" fill="#e5c17a"/><line x1="490.97" y1="296.07" x2="498.52" y2="291.74" stroke="#8a5a30" stroke-width="0.5"/><polygon points="501.52,290.02 514.88,297.71 522.43,293.39 509.07,285.70" fill="#e5c17a"/><line x1="501.52" y1="290.02" x2="509.07" y2="285.70" stroke="#8a5a30" stroke-width="0.5"/><polygon points="512.07,283.98 525.43,291.67 532.98,287.34 519.62,279.65" fill="#e5c17a"/><line x1="512.07" y1="283.98" x2="519.62" y2="279.65" stroke="#8a5a30" stroke-width="0.5"/><polygon points="522.62,277.93 535.98,285.62 543.53,281.30 530.17,273.60" fill="#e5c17a"/><line x1="522.62" y1="277.93" x2="530.17" y2="273.60" stroke="#8a5a30" stroke-width="0.5"/><polygon points="538.04,271.30 546.35,276.08 554.46,274.20 557.74,269.55 549.44,264.77 542.40,267.26" fill="#8c8679"/><polygon points="533.67,272.63 537.67,270.34 537.67,280.34 533.67,282.63" fill="#7a4c2a"/><line x1="553.27" y1="264.27" x2="553.27" y2="272.27" stroke="#6a4224" stroke-width="1.2"/><polygon points="547.07,262.08 562.83,271.15 564.03,270.47 548.27,261.39" fill="#dcae7a"/><polygon points="559.14,259.21 567.45,263.99 575.56,262.11 578.84,257.46 570.54,252.68 563.50,255.17" fill="#8c8679"/><polygon points="554.77,260.54 558.77,258.25 558.77,268.25 554.77,270.54" fill="#7a4c2a"/><line x1="574.37" y1="252.18" x2="574.37" y2="260.18" stroke="#6a4224" stroke-width="1.2"/><polygon points="568.17,249.99 583.93,259.06 585.13,258.38 569.37,249.30" fill="#dcae7a"/><polygon points="580.24,247.12 588.55,251.90 596.66,250.02 599.94,245.37 591.64,240.59 584.60,243.08" fill="#8c8679"/><polygon points="575.87,248.45 579.87,246.16 579.87,256.16 575.87,258.45" fill="#7a4c2a"/><line x1="595.47" y1="240.09" x2="595.47" y2="248.09" stroke="#6a4224" stroke-width="1.2"/><polygon points="589.27,237.90 605.03,246.97 606.23,246.28 590.47,237.21" fill="#dcae7a"/><polygon points="601.34,235.02 609.65,239.81 617.76,237.93 621.04,233.28 612.74,228.49 605.70,230.99" fill="#8c8679"/><polygon points="596.97,236.36 600.97,234.07 600.97,244.07 596.97,246.36" fill="#7a4c2a"/><line x1="616.57" y1="228.00" x2="616.57" y2="236.00" stroke="#6a4224" stroke-width="1.2"/><polygon points="610.37,225.81 626.13,234.88 627.33,234.19 611.57,225.12" fill="#dcae7a"/><polygon points="622.44,222.93 630.75,227.71 638.86,225.84 642.14,221.18 633.84,216.40 626.80,218.90" fill="#8c8679"/><polygon points="618.07,224.27 622.07,221.97 622.07,231.97 618.07,234.27" fill="#7a4c2a"/><line x1="637.67" y1="215.91" x2="637.67" y2="223.91" stroke="#6a4224" stroke-width="1.2"/><polygon points="631.47,213.72 647.23,222.79 648.43,222.10 632.67,213.03" fill="#dcae7a"/><polygon points="465.87,308.61 481.63,317.69 483.13,316.83 467.37,307.76" fill="#d8a672"/><line x1="465.57" y1="308.79" x2="481.33" y2="317.86" stroke="#5e3b1e" stroke-width="0.55"/><polygon points="476.42,302.57 492.18,311.64 493.68,310.78 477.92,301.71" fill="#d8a672"/><line x1="476.12" y1="302.74" x2="491.88" y2="311.81" stroke="#5e3b1e" stroke-width="0.55"/><polygon points="486.97,296.52 502.73,305.60 504.23,304.74 488.47,295.66" fill="#d8a672"/><line x1="486.67" y1="296.69" x2="502.43" y2="305.77" stroke="#5e3b1e" stroke-width="0.55"/><polygon points="497.52,290.48 513.28,299.55 514.78,298.69 499.02,289.62" fill="#d8a672"/><line x1="497.22" y1="290.65" x2="512.98" y2="299.72" stroke="#5e3b1e" stroke-width="0.55"/><polygon points="508.07,284.43 523.83,293.50 525.33,292.64 509.57,283.57" fill="#d8a672"/><line x1="507.77" y1="284.60" x2="523.53" y2="293.68" stroke="#5e3b1e" stroke-width="0.55"/><polygon points="518.62,278.39 534.38,287.46 535.88,286.60 520.12,277.53" fill="#d8a672"/><line x1="518.32" y1="278.56" x2="534.08" y2="287.63" stroke="#5e3b1e" stroke-width="0.55"/><polygon points="529.17,272.34 544.93,281.41 546.43,280.55 530.67,271.48" fill="#d8a672"/><line x1="528.87" y1="272.51" x2="544.63" y2="281.58" stroke="#5e3b1e" stroke-width="0.55"/><polygon points="539.72,266.29 555.48,275.37 556.68,274.68 540.92,265.61" fill="#d7a672"/><polygon points="550.27,260.25 566.03,269.32 567.53,268.46 551.77,259.39" fill="#d8a672"/><line x1="549.97" y1="260.42" x2="565.73" y2="269.49" stroke="#5e3b1e" stroke-width="0.55"/><polygon points="560.82,254.20 576.58,263.27 577.78,262.59 562.02,253.51" fill="#d7a672"/><polygon points="571.37,248.16 587.13,257.23 588.63,256.37 572.87,247.30" fill="#d8a672"/><line x1="571.07" y1="248.33" x2="586.83" y2="257.40" stroke="#5e3b1e" stroke-width="0.55"/><polygon points="581.92,242.11 597.68,251.18 598.88,250.50 583.12,241.42" fill="#d7a672"/><polygon points="592.47,236.06 608.23,245.14 609.73,244.28 593.97,235.20" fill="#d8a672"/><line x1="592.17" y1="236.24" x2="607.93" y2="245.31" stroke="#5e3b1e" stroke-width="0.55"/><polygon points="603.02,230.02 618.78,239.09 619.98,238.40 604.22,229.33" fill="#d7a672"/><polygon points="613.57,223.97 629.33,233.05 630.83,232.19 615.07,223.11" fill="#d8a672"/><line x1="613.27" y1="224.14" x2="629.03" y2="233.22" stroke="#5e3b1e" stroke-width="0.55"/><polygon points="624.12,217.93 639.88,227.00 641.08,226.31 625.32,217.24" fill="#d7a672"/><polygon points="634.67,211.88 650.43,220.95 651.93,220.09 636.17,211.02" fill="#d8a672"/><line x1="634.37" y1="212.05" x2="650.13" y2="221.13" stroke="#5e3b1e" stroke-width="0.55"/><polygon points="491.63,320.69 504.99,328.38 512.54,324.05 499.18,316.36" fill="#e5c17a"/><line x1="491.63" y1="320.69" x2="499.18" y2="316.36" stroke="#8a5a30" stroke-width="0.5"/><polygon points="502.18,314.64 515.54,322.33 523.09,318.01 509.73,310.31" fill="#e5c17a"/><line x1="502.18" y1="314.64" x2="509.73" y2="310.31" stroke="#8a5a30" stroke-width="0.5"/><polygon points="512.73,308.59 526.09,316.29 533.64,311.96 520.28,304.27" fill="#e5c17a"/><line x1="512.73" y1="308.59" x2="520.28" y2="304.27" stroke="#8a5a30" stroke-width="0.5"/><polygon points="523.28,302.55 536.64,310.24 544.19,305.91 530.83,298.22" fill="#e5c17a"/><line x1="523.28" y1="302.55" x2="530.83" y2="298.22" stroke="#8a5a30" stroke-width="0.5"/><polygon points="533.83,296.50 547.19,304.19 554.74,299.87 541.38,292.18" fill="#e5c17a"/><line x1="533.83" y1="296.50" x2="541.38" y2="292.18" stroke="#8a5a30" stroke-width="0.5"/><polygon points="544.38,290.46 557.74,298.15 565.29,293.82 551.93,286.13" fill="#e5c17a"/><line x1="544.38" y1="290.46" x2="551.93" y2="286.13" stroke="#8a5a30" stroke-width="0.5"/><polygon points="559.81,283.83 568.11,288.61 576.22,286.73 579.51,282.08 571.20,277.30 564.16,279.79" fill="#8c8679"/><polygon points="555.43,285.16 559.43,282.87 559.43,292.87 555.43,295.16" fill="#7a4c2a"/><line x1="575.03" y1="276.80" x2="575.03" y2="284.80" stroke="#6a4224" stroke-width="1.2"/><polygon points="568.83,274.61 584.59,283.68 585.79,282.99 570.03,273.92" fill="#dcae7a"/><polygon points="580.91,271.73 589.21,276.52 597.32,274.64 600.61,269.99 592.30,265.20 585.26,267.70" fill="#8c8679"/><polygon points="576.53,273.07 580.53,270.77 580.53,280.77 576.53,283.07" fill="#7a4c2a"/><line x1="596.13" y1="264.71" x2="596.13" y2="272.71" stroke="#6a4224" stroke-width="1.2"/><polygon points="589.93,262.52 605.69,271.59 606.89,270.90 591.13,261.83" fill="#dcae7a"/><polygon points="602.01,259.64 610.31,264.42 618.42,262.55 621.71,257.89 613.40,253.11 606.36,255.61" fill="#8c8679"/><polygon points="597.63,260.98 601.63,258.68 601.63,268.68 597.63,270.98" fill="#7a4c2a"/><line x1="617.23" y1="252.61" x2="617.23" y2="260.61" stroke="#6a4224" stroke-width="1.2"/><polygon points="611.03,250.42 626.79,259.50 627.99,258.81 612.23,249.74" fill="#dcae7a"/><polygon points="623.11,247.55 631.41,252.33 639.52,250.46 642.81,245.80 634.50,241.02 627.46,243.51" fill="#8c8679"/><polygon points="618.73,248.88 622.73,246.59 622.73,256.59 618.73,258.88" fill="#7a4c2a"/><line x1="638.33" y1="240.52" x2="638.33" y2="248.52" stroke="#6a4224" stroke-width="1.2"/><polygon points="632.13,238.33 647.89,247.41 649.09,246.72 633.33,237.65" fill="#dcae7a"/><polygon points="644.21,235.46 652.51,240.24 660.62,238.36 663.91,233.71 655.60,228.93 648.56,231.42" fill="#8c8679"/><polygon points="639.83,236.79 643.83,234.50 643.83,244.50 639.83,246.79" fill="#7a4c2a"/><line x1="659.43" y1="228.43" x2="659.43" y2="236.43" stroke="#6a4224" stroke-width="1.2"/><polygon points="653.23,226.24 668.99,235.31 670.19,234.63 654.43,225.55" fill="#dcae7a"/><polygon points="487.63,321.14 503.39,330.21 504.89,329.35 489.13,320.28" fill="#d8a672"/><line x1="487.33" y1="321.31" x2="503.09" y2="330.39" stroke="#5e3b1e" stroke-width="0.55"/><polygon points="498.18,315.10 513.94,324.17 515.44,323.31 499.68,314.24" fill="#d8a672"/><line x1="497.88" y1="315.27" x2="513.64" y2="324.34" stroke="#5e3b1e" stroke-width="0.55"/><polygon points="508.73,309.05 524.49,318.12 525.99,317.26 510.23,308.19" fill="#d8a672"/><line x1="508.43" y1="309.22" x2="524.19" y2="318.29" stroke="#5e3b1e" stroke-width="0.55"/><polygon points="519.28,303.00 535.04,312.08 536.54,311.22 520.78,302.14" fill="#d8a672"/><line x1="518.98" y1="303.18" x2="534.74" y2="312.25" stroke="#5e3b1e" stroke-width="0.55"/><polygon points="529.83,296.96 545.59,306.03 547.09,305.17 531.33,296.10" fill="#d8a672"/><line x1="529.53" y1="297.13" x2="545.29" y2="306.20" stroke="#5e3b1e" stroke-width="0.55"/><polygon points="540.38,290.91 556.14,299.98 557.64,299.13 541.88,290.05" fill="#d8a672"/><line x1="540.08" y1="291.08" x2="555.84" y2="300.16" stroke="#5e3b1e" stroke-width="0.55"/><polygon points="550.93,284.87 566.69,293.94 568.19,293.08 552.43,284.01" fill="#d8a672"/><line x1="550.63" y1="285.04" x2="566.39" y2="294.11" stroke="#5e3b1e" stroke-width="0.55"/><polygon points="561.48,278.82 577.24,287.89 578.44,287.21 562.68,278.13" fill="#d7a672"/><polygon points="572.03,272.77 587.79,281.85 589.29,280.99 573.53,271.91" fill="#d8a672"/><line x1="571.73" y1="272.95" x2="587.49" y2="282.02" stroke="#5e3b1e" stroke-width="0.55"/><polygon points="582.58,266.73 598.34,275.80 599.54,275.11 583.78,266.04" fill="#d7a672"/><polygon points="593.13,260.68 608.89,269.76 610.39,268.90 594.63,259.82" fill="#d8a672"/><line x1="592.83" y1="260.85" x2="608.59" y2="269.93" stroke="#5e3b1e" stroke-width="0.55"/><polygon points="603.68,254.64 619.44,263.71 620.64,263.02 604.88,253.95" fill="#d7a672"/><polygon points="614.23,248.59 629.99,257.66 631.49,256.80 615.73,247.73" fill="#d8a672"/><line x1="613.93" y1="248.76" x2="629.69" y2="257.84" stroke="#5e3b1e" stroke-width="0.55"/><polygon points="624.78,242.55 640.54,251.62 641.74,250.93 625.98,241.86" fill="#d7a672"/><polygon points="635.33,236.50 651.09,245.57 652.59,244.71 636.83,235.64" fill="#d8a672"/><line x1="635.03" y1="236.67" x2="650.79" y2="245.74" stroke="#5e3b1e" stroke-width="0.55"/><polygon points="645.88,230.45 661.64,239.53 662.84,238.84 647.08,229.77" fill="#d7a672"/><polygon points="656.43,224.41 672.19,233.48 673.69,232.62 657.93,223.55" fill="#d8a672"/><line x1="656.13" y1="224.58" x2="671.89" y2="233.65" stroke="#5e3b1e" stroke-width="0.55"/><polygon points="513.39,333.21 526.76,340.90 534.31,336.58 520.94,328.89" fill="#e5c17a"/><line x1="513.39" y1="333.21" x2="520.94" y2="328.89" stroke="#8a5a30" stroke-width="0.5"/><polygon points="523.94,327.17 537.31,334.86 544.86,330.53 531.49,322.84" fill="#e5c17a"/><line x1="523.94" y1="327.17" x2="531.49" y2="322.84" stroke="#8a5a30" stroke-width="0.5"/><polygon points="534.49,321.12 547.86,328.81 555.41,324.49 542.04,316.79" fill="#e5c17a"/><line x1="534.49" y1="321.12" x2="542.04" y2="316.79" stroke="#8a5a30" stroke-width="0.5"/><polygon points="545.04,315.08 558.41,322.77 565.96,318.44 552.59,310.75" fill="#e5c17a"/><line x1="545.04" y1="315.08" x2="552.59" y2="310.75" stroke="#8a5a30" stroke-width="0.5"/><polygon points="555.59,309.03 568.96,316.72 576.51,312.39 563.14,304.70" fill="#e5c17a"/><line x1="555.59" y1="309.03" x2="563.14" y2="304.70" stroke="#8a5a30" stroke-width="0.5"/><polygon points="566.14,302.98 579.51,310.68 587.06,306.35 573.69,298.66" fill="#e5c17a"/><line x1="566.14" y1="302.98" x2="573.69" y2="298.66" stroke="#8a5a30" stroke-width="0.5"/><polygon points="581.57,296.35 589.88,301.13 597.99,299.26 601.27,294.60 592.96,289.82 585.93,292.32" fill="#8c8679"/><polygon points="577.19,297.69 581.19,295.39 581.19,305.39 577.19,307.69" fill="#7a4c2a"/><line x1="596.79" y1="289.32" x2="596.79" y2="297.32" stroke="#6a4224" stroke-width="1.2"/><polygon points="590.59,287.13 606.36,296.21 607.56,295.52 591.79,286.45" fill="#dcae7a"/><polygon points="602.67,284.26 610.98,289.04 619.09,287.16 622.37,282.51 614.06,277.73 607.03,280.22" fill="#8c8679"/><polygon points="598.29,285.59 602.29,283.30 602.29,293.30 598.29,295.59" fill="#7a4c2a"/><line x1="617.89" y1="277.23" x2="617.89" y2="285.23" stroke="#6a4224" stroke-width="1.2"/><polygon points="611.69,275.04 627.46,284.12 628.66,283.43 612.89,274.36" fill="#dcae7a"/><polygon points="623.77,272.17 632.08,276.95 640.19,275.07 643.47,270.42 635.16,265.64 628.13,268.13" fill="#8c8679"/><polygon points="619.39,273.50 623.39,271.21 623.39,281.21 619.39,283.50" fill="#7a4c2a"/><line x1="638.99" y1="265.14" x2="638.99" y2="273.14" stroke="#6a4224" stroke-width="1.2"/><polygon points="632.79,262.95 648.56,272.02 649.76,271.34 633.99,262.26" fill="#dcae7a"/><polygon points="644.87,260.08 653.18,264.86 661.29,262.98 664.57,258.33 656.26,253.55 649.23,256.04" fill="#8c8679"/><polygon points="640.49,261.41 644.49,259.12 644.49,269.12 640.49,271.41" fill="#7a4c2a"/><line x1="660.09" y1="253.05" x2="660.09" y2="261.05" stroke="#6a4224" stroke-width="1.2"/><polygon points="653.89,250.86 669.66,259.93 670.86,259.24 655.09,250.17" fill="#dcae7a"/><polygon points="665.97,247.99 674.28,252.77 682.39,250.89 685.67,246.24 677.36,241.46 670.33,243.95" fill="#8c8679"/><polygon points="661.59,249.32 665.59,247.03 665.59,257.03 661.59,259.32" fill="#7a4c2a"/><line x1="681.19" y1="240.96" x2="681.19" y2="248.96" stroke="#6a4224" stroke-width="1.2"/><polygon points="674.99,238.77 690.76,247.84 691.96,247.15 676.19,238.08" fill="#dcae7a"/><polygon points="509.39,333.67 525.16,342.74 526.66,341.88 510.89,332.81" fill="#d8a672"/><line x1="509.09" y1="333.84" x2="524.86" y2="342.91" stroke="#5e3b1e" stroke-width="0.55"/><polygon points="519.94,327.62 535.71,336.69 537.21,335.83 521.44,326.76" fill="#d8a672"/><line x1="519.64" y1="327.79" x2="535.41" y2="336.87" stroke="#5e3b1e" stroke-width="0.55"/><polygon points="530.49,321.58 546.26,330.65 547.76,329.79 531.99,320.72" fill="#d8a672"/><line x1="530.19" y1="321.75" x2="545.96" y2="330.82" stroke="#5e3b1e" stroke-width="0.55"/><polygon points="541.04,315.53 556.81,324.60 558.31,323.74 542.54,314.67" fill="#d8a672"/><line x1="540.74" y1="315.70" x2="556.51" y2="324.77" stroke="#5e3b1e" stroke-width="0.55"/><polygon points="551.59,309.48 567.36,318.56 568.86,317.70 553.09,308.62" fill="#d8a672"/><line x1="551.29" y1="309.66" x2="567.06" y2="318.73" stroke="#5e3b1e" stroke-width="0.55"/><polygon points="562.14,303.44 577.91,312.51 579.41,311.65 563.64,302.58" fill="#d8a672"/><line x1="561.84" y1="303.61" x2="577.61" y2="312.68" stroke="#5e3b1e" stroke-width="0.55"/><polygon points="572.69,297.39 588.46,306.47 589.96,305.61 574.19,296.53" fill="#d8a672"/><line x1="572.39" y1="297.56" x2="588.16" y2="306.64" stroke="#5e3b1e" stroke-width="0.55"/><polygon points="583.24,291.35 599.01,300.42 600.21,299.73 584.44,290.66" fill="#d7a672"/><polygon points="593.79,285.30 609.56,294.37 611.06,293.51 595.29,284.44" fill="#d8a672"/><line x1="593.49" y1="285.47" x2="609.26" y2="294.55" stroke="#5e3b1e" stroke-width="0.55"/><polygon points="604.34,279.25 620.11,288.33 621.31,287.64 605.54,278.57" fill="#d7a672"/><polygon points="614.89,273.21 630.66,282.28 632.16,281.42 616.39,272.35" fill="#d8a672"/><line x1="614.59" y1="273.38" x2="630.36" y2="282.45" stroke="#5e3b1e" stroke-width="0.55"/><polygon points="625.44,267.16 641.21,276.24 642.41,275.55 626.64,266.48" fill="#d7a672"/><polygon points="635.99,261.12 651.76,270.19 653.26,269.33 637.49,260.26" fill="#d8a672"/><line x1="635.69" y1="261.29" x2="651.46" y2="270.36" stroke="#5e3b1e" stroke-width="0.55"/><polygon points="646.54,255.07 662.31,264.14 663.51,263.46 647.74,254.38" fill="#d7a672"/><polygon points="657.09,249.03 672.86,258.10 674.36,257.24 658.59,248.17" fill="#d8a672"/><line x1="656.79" y1="249.20" x2="672.56" y2="258.27" stroke="#5e3b1e" stroke-width="0.55"/><polygon points="667.64,242.98 683.41,252.05 684.61,251.36 668.84,242.29" fill="#d7a672"/><polygon points="678.19,236.93 693.96,246.01 695.46,245.15 679.69,236.07" fill="#d8a672"/><line x1="677.89" y1="237.11" x2="693.66" y2="246.18" stroke="#5e3b1e" stroke-width="0.55"/><polygon points="535.16,345.74 548.52,353.43 556.07,349.10 542.71,341.41" fill="#e5c17a"/><line x1="535.16" y1="345.74" x2="542.71" y2="341.41" stroke="#8a5a30" stroke-width="0.5"/><polygon points="545.71,339.69 559.07,347.38 566.62,343.06 553.26,335.37" fill="#e5c17a"/><line x1="545.71" y1="339.69" x2="553.26" y2="335.37" stroke="#8a5a30" stroke-width="0.5"/><polygon points="556.26,333.65 569.62,341.34 577.17,337.01 563.81,329.32" fill="#e5c17a"/><line x1="556.26" y1="333.65" x2="563.81" y2="329.32" stroke="#8a5a30" stroke-width="0.5"/><polygon points="566.81,327.60 580.17,335.29 587.72,330.97 574.36,323.28" fill="#e5c17a"/><line x1="566.81" y1="327.60" x2="574.36" y2="323.28" stroke="#8a5a30" stroke-width="0.5"/><polygon points="577.36,321.56 590.72,329.25 598.27,324.92 584.91,317.23" fill="#e5c17a"/><line x1="577.36" y1="321.56" x2="584.91" y2="317.23" stroke="#8a5a30" stroke-width="0.5"/><polygon points="587.91,315.51 601.27,323.20 608.82,318.87 595.46,311.18" fill="#e5c17a"/><line x1="587.91" y1="315.51" x2="595.46" y2="311.18" stroke="#8a5a30" stroke-width="0.5"/><polygon points="603.33,308.88 611.64,313.66 619.75,311.78 623.03,307.13 614.73,302.35 607.69,304.84" fill="#8c8679"/><polygon points="598.96,310.21 602.96,307.92 602.96,317.92 598.96,320.21" fill="#7a4c2a"/><line x1="618.56" y1="301.85" x2="618.56" y2="309.85" stroke="#6a4224" stroke-width="1.2"/><polygon points="612.36,299.66 628.12,308.73 629.32,308.05 613.56,298.97" fill="#dcae7a"/><polygon points="624.43,296.79 632.74,301.57 640.85,299.69 644.13,295.04 635.83,290.26 628.79,292.75" fill="#8c8679"/><polygon points="620.06,298.12 624.06,295.83 624.06,305.83 620.06,308.12" fill="#7a4c2a"/><line x1="639.66" y1="289.76" x2="639.66" y2="297.76" stroke="#6a4224" stroke-width="1.2"/><polygon points="633.46,287.57 649.22,296.64 650.42,295.95 634.66,286.88" fill="#dcae7a"/><polygon points="645.53,284.69 653.84,289.48 661.95,287.60 665.23,282.95 656.93,278.17 649.89,280.66" fill="#8c8679"/><polygon points="641.16,286.03 645.16,283.74 645.16,293.74 641.16,296.03" fill="#7a4c2a"/><line x1="660.76" y1="277.67" x2="660.76" y2="285.67" stroke="#6a4224" stroke-width="1.2"/><polygon points="654.56,275.48 670.32,284.55 671.52,283.86 655.76,274.79" fill="#dcae7a"/><polygon points="666.63,272.60 674.94,277.38 683.05,275.51 686.33,270.86 678.03,266.07 670.99,268.57" fill="#8c8679"/><polygon points="662.26,273.94 666.26,271.64 666.26,281.64 662.26,283.94" fill="#7a4c2a"/><line x1="681.86" y1="265.58" x2="681.86" y2="273.58" stroke="#6a4224" stroke-width="1.2"/><polygon points="675.66,263.39 691.42,272.46 692.62,271.77 676.86,262.70" fill="#dcae7a"/><polygon points="687.73,260.51 696.04,265.29 704.15,263.42 707.43,258.76 699.13,253.98 692.09,256.48" fill="#8c8679"/><polygon points="683.36,261.84 687.36,259.55 687.36,269.55 683.36,271.84" fill="#7a4c2a"/><line x1="702.96" y1="253.48" x2="702.96" y2="261.48" stroke="#6a4224" stroke-width="1.2"/><polygon points="696.76,251.29 712.52,260.37 713.72,259.68 697.96,250.61" fill="#dcae7a"/><polygon points="531.16,346.19 546.92,355.27 548.42,354.41 532.66,345.33" fill="#d8a672"/><line x1="530.86" y1="346.37" x2="546.62" y2="355.44" stroke="#5e3b1e" stroke-width="0.55"/><polygon points="541.71,340.15 557.47,349.22 558.97,348.36 543.21,339.29" fill="#d8a672"/><line x1="541.41" y1="340.32" x2="557.17" y2="349.39" stroke="#5e3b1e" stroke-width="0.55"/><polygon points="552.26,334.10 568.02,343.17 569.52,342.32 553.76,333.24" fill="#d8a672"/><line x1="551.96" y1="334.27" x2="567.72" y2="343.35" stroke="#5e3b1e" stroke-width="0.55"/><polygon points="562.81,328.06 578.57,337.13 580.07,336.27 564.31,327.20" fill="#d8a672"/><line x1="562.51" y1="328.23" x2="578.27" y2="337.30" stroke="#5e3b1e" stroke-width="0.55"/><polygon points="573.36,322.01 589.12,331.08 590.62,330.22 574.86,321.15" fill="#d8a672"/><line x1="573.06" y1="322.18" x2="588.82" y2="331.26" stroke="#5e3b1e" stroke-width="0.55"/><polygon points="583.91,315.96 599.67,325.04 601.17,324.18 585.41,315.10" fill="#d8a672"/><line x1="583.61" y1="316.14" x2="599.37" y2="325.21" stroke="#5e3b1e" stroke-width="0.55"/><polygon points="594.46,309.92 610.22,318.99 611.72,318.13 595.96,309.06" fill="#d8a672"/><line x1="594.16" y1="310.09" x2="609.92" y2="319.16" stroke="#5e3b1e" stroke-width="0.55"/><polygon points="605.01,303.87 620.77,312.95 621.97,312.26 606.21,303.19" fill="#d7a672"/><polygon points="615.56,297.83 631.32,306.90 632.82,306.04 617.06,296.97" fill="#d8a672"/><line x1="615.26" y1="298.00" x2="631.02" y2="307.07" stroke="#5e3b1e" stroke-width="0.55"/><polygon points="626.11,291.78 641.87,300.85 643.07,300.17 627.31,291.09" fill="#d7a672"/><polygon points="636.66,285.74 652.42,294.81 653.92,293.95 638.16,284.88" fill="#d8a672"/><line x1="636.36" y1="285.91" x2="652.12" y2="294.98" stroke="#5e3b1e" stroke-width="0.55"/><polygon points="647.21,279.69 662.97,288.76 664.17,288.07 648.41,279.00" fill="#d7a672"/><polygon points="657.76,273.64 673.52,282.72 675.02,281.86 659.26,272.78" fill="#d8a672"/><line x1="657.46" y1="273.82" x2="673.22" y2="282.89" stroke="#5e3b1e" stroke-width="0.55"/><polygon points="668.31,267.60 684.07,276.67 685.27,275.98 669.51,266.91" fill="#d7a672"/><polygon points="678.86,261.55 694.62,270.62 696.12,269.77 680.36,260.69" fill="#d8a672"/><line x1="678.56" y1="261.72" x2="694.32" y2="270.80" stroke="#5e3b1e" stroke-width="0.55"/><polygon points="689.41,255.51 705.17,264.58 706.37,263.89 690.61,254.82" fill="#d7a672"/><polygon points="699.96,249.46 715.72,258.53 717.22,257.67 701.46,248.60" fill="#d8a672"/><line x1="699.66" y1="249.63" x2="715.42" y2="258.70" stroke="#5e3b1e" stroke-width="0.55"/><polygon points="556.92,358.27 570.28,365.96 577.83,361.63 564.47,353.94" fill="#e5c17a"/><line x1="556.92" y1="358.27" x2="564.47" y2="353.94" stroke="#8a5a30" stroke-width="0.5"/><polygon points="567.47,352.22 580.83,359.91 588.38,355.58 575.02,347.89" fill="#e5c17a"/><line x1="567.47" y1="352.22" x2="575.02" y2="347.89" stroke="#8a5a30" stroke-width="0.5"/><polygon points="578.02,346.17 591.38,353.87 598.93,349.54 585.57,341.85" fill="#e5c17a"/><line x1="578.02" y1="346.17" x2="585.57" y2="341.85" stroke="#8a5a30" stroke-width="0.5"/><polygon points="588.57,340.13 601.93,347.82 609.48,343.49 596.12,335.80" fill="#e5c17a"/><line x1="588.57" y1="340.13" x2="596.12" y2="335.80" stroke="#8a5a30" stroke-width="0.5"/><polygon points="599.12,334.08 612.48,341.77 620.03,337.45 606.67,329.76" fill="#e5c17a"/><line x1="599.12" y1="334.08" x2="606.67" y2="329.76" stroke="#8a5a30" stroke-width="0.5"/><polygon points="609.67,328.04 623.03,335.73 630.58,331.40 617.22,323.71" fill="#e5c17a"/><line x1="609.67" y1="328.04" x2="617.22" y2="323.71" stroke="#8a5a30" stroke-width="0.5"/><polygon points="625.10,321.40 633.40,326.19 641.51,324.31 644.80,319.66 636.49,314.88 629.45,317.37" fill="#8c8679"/><polygon points="620.72,322.74 624.72,320.45 624.72,330.45 620.72,332.74" fill="#7a4c2a"/><line x1="640.32" y1="314.38" x2="640.32" y2="322.38" stroke="#6a4224" stroke-width="1.2"/><polygon points="634.12,312.19 649.88,321.26 651.08,320.57 635.32,311.50" fill="#dcae7a"/><polygon points="646.20,309.31 654.50,314.09 662.61,312.22 665.90,307.56 657.59,302.78 650.55,305.28" fill="#8c8679"/><polygon points="641.82,310.65 645.82,308.35 645.82,318.35 641.82,320.65" fill="#7a4c2a"/><line x1="661.42" y1="302.29" x2="661.42" y2="310.29" stroke="#6a4224" stroke-width="1.2"/><polygon points="655.22,300.10 670.98,309.17 672.18,308.48 656.42,299.41" fill="#dcae7a"/><polygon points="667.30,297.22 675.60,302.00 683.71,300.13 687.00,295.47 678.69,290.69 671.65,293.19" fill="#8c8679"/><polygon points="662.92,298.55 666.92,296.26 666.92,306.26 662.92,308.55" fill="#7a4c2a"/><line x1="682.52" y1="290.19" x2="682.52" y2="298.19" stroke="#6a4224" stroke-width="1.2"/><polygon points="676.32,288.00 692.08,297.08 693.28,296.39 677.52,287.32" fill="#dcae7a"/><polygon points="688.40,285.13 696.70,289.91 704.81,288.03 708.10,283.38 699.79,278.60 692.75,281.09" fill="#8c8679"/><polygon points="684.02,286.46 688.02,284.17 688.02,294.17 684.02,296.46" fill="#7a4c2a"/><line x1="703.62" y1="278.10" x2="703.62" y2="286.10" stroke="#6a4224" stroke-width="1.2"/><polygon points="697.42,275.91 713.18,284.98 714.38,284.30 698.62,275.22" fill="#dcae7a"/><polygon points="709.50,273.04 717.80,277.82 725.91,275.94 729.20,271.29 720.89,266.51 713.85,269.00" fill="#8c8679"/><polygon points="705.12,274.37 709.12,272.08 709.12,282.08 705.12,284.37" fill="#7a4c2a"/><line x1="724.72" y1="266.01" x2="724.72" y2="274.01" stroke="#6a4224" stroke-width="1.2"/><polygon points="718.52,263.82 734.28,272.89 735.48,272.21 719.72,263.13" fill="#dcae7a"/><polygon points="552.92,358.72 568.68,367.79 570.18,366.93 554.42,357.86" fill="#d8a672"/><line x1="552.62" y1="358.89" x2="568.38" y2="367.96" stroke="#5e3b1e" stroke-width="0.55"/><polygon points="563.47,352.67 579.23,361.75 580.73,360.89 564.97,351.81" fill="#d8a672"/><line x1="563.17" y1="352.85" x2="578.93" y2="361.92" stroke="#5e3b1e" stroke-width="0.55"/><polygon points="574.02,346.63 589.78,355.70 591.28,354.84 575.52,345.77" fill="#d8a672"/><line x1="573.72" y1="346.80" x2="589.48" y2="355.87" stroke="#5e3b1e" stroke-width="0.55"/><polygon points="584.57,340.58 600.33,349.66 601.83,348.80 586.07,339.72" fill="#d8a672"/><line x1="584.27" y1="340.75" x2="600.03" y2="349.83" stroke="#5e3b1e" stroke-width="0.55"/><polygon points="595.12,334.54 610.88,343.61 612.38,342.75 596.62,333.68" fill="#d8a672"/><line x1="594.82" y1="334.71" x2="610.58" y2="343.78" stroke="#5e3b1e" stroke-width="0.55"/><polygon points="605.67,328.49 621.43,337.56 622.93,336.70 607.17,327.63" fill="#d8a672"/><line x1="605.37" y1="328.66" x2="621.13" y2="337.74" stroke="#5e3b1e" stroke-width="0.55"/><polygon points="616.22,322.44 631.98,331.52 633.48,330.66 617.72,321.59" fill="#d8a672"/><line x1="615.92" y1="322.62" x2="631.68" y2="331.69" stroke="#5e3b1e" stroke-width="0.55"/><polygon points="626.77,316.40 642.53,325.47 643.73,324.78 627.97,315.71" fill="#d7a672"/><polygon points="637.32,310.35 653.08,319.43 654.58,318.57 638.82,309.49" fill="#d8a672"/><line x1="637.02" y1="310.53" x2="652.78" y2="319.60" stroke="#5e3b1e" stroke-width="0.55"/><polygon points="647.87,304.31 663.63,313.38 664.83,312.69 649.07,303.62" fill="#d7a672"/><polygon points="658.42,298.26 674.18,307.33 675.68,306.47 659.92,297.40" fill="#d8a672"/><line x1="658.12" y1="298.43" x2="673.88" y2="307.51" stroke="#5e3b1e" stroke-width="0.55"/><polygon points="668.97,292.22 684.73,301.29 685.93,300.60 670.17,291.53" fill="#d7a672"/><polygon points="679.52,286.17 695.28,295.24 696.78,294.38 681.02,285.31" fill="#d8a672"/><line x1="679.22" y1="286.34" x2="694.98" y2="295.41" stroke="#5e3b1e" stroke-width="0.55"/><polygon points="690.07,280.12 705.83,289.20 707.03,288.51 691.27,279.44" fill="#d7a672"/><polygon points="700.62,274.08 716.38,283.15 717.88,282.29 702.12,273.22" fill="#d8a672"/><line x1="700.32" y1="274.25" x2="716.08" y2="283.32" stroke="#5e3b1e" stroke-width="0.55"/><polygon points="711.17,268.03 726.93,277.11 728.13,276.42 712.37,267.34" fill="#d7a672"/><polygon points="721.72,261.99 737.48,271.06 738.98,270.20 723.22,261.13" fill="#d8a672"/><line x1="721.42" y1="262.16" x2="737.18" y2="271.23" stroke="#5e3b1e" stroke-width="0.55"/><polygon points="578.68,370.79 592.05,378.48 599.60,374.16 586.23,366.47" fill="#e5c17a"/><line x1="578.68" y1="370.79" x2="586.23" y2="366.47" stroke="#8a5a30" stroke-width="0.5"/><polygon points="589.23,364.75 602.60,372.44 610.15,368.11 596.78,360.42" fill="#e5c17a"/><line x1="589.23" y1="364.75" x2="596.78" y2="360.42" stroke="#8a5a30" stroke-width="0.5"/><polygon points="599.78,358.70 613.15,366.39 620.70,362.07 607.33,354.37" fill="#e5c17a"/><line x1="599.78" y1="358.70" x2="607.33" y2="354.37" stroke="#8a5a30" stroke-width="0.5"/><polygon points="610.33,352.65 623.70,360.35 631.25,356.02 617.88,348.33" fill="#e5c17a"/><line x1="610.33" y1="352.65" x2="617.88" y2="348.33" stroke="#8a5a30" stroke-width="0.5"/><polygon points="620.88,346.61 634.25,354.30 641.80,349.97 628.43,342.28" fill="#e5c17a"/><line x1="620.88" y1="346.61" x2="628.43" y2="342.28" stroke="#8a5a30" stroke-width="0.5"/><polygon points="631.43,340.56 644.80,348.25 652.35,343.93 638.98,336.24" fill="#e5c17a"/><line x1="631.43" y1="340.56" x2="638.98" y2="336.24" stroke="#8a5a30" stroke-width="0.5"/><polygon points="646.86,333.93 655.17,338.71 663.28,336.84 666.56,332.18 658.25,327.40 651.22,329.89" fill="#8c8679"/><polygon points="642.48,335.26 646.48,332.97 646.48,342.97 642.48,345.26" fill="#7a4c2a"/><line x1="662.08" y1="326.90" x2="662.08" y2="334.90" stroke="#6a4224" stroke-width="1.2"/><polygon points="655.88,324.71 671.65,333.79 672.85,333.10 657.08,324.03" fill="#dcae7a"/><polygon points="667.96,321.84 676.27,326.62 684.38,324.74 687.66,320.09 679.35,315.31 672.32,317.80" fill="#8c8679"/><polygon points="663.58,323.17 667.58,320.88 667.58,330.88 663.58,333.17" fill="#7a4c2a"/><line x1="683.18" y1="314.81" x2="683.18" y2="322.81" stroke="#6a4224" stroke-width="1.2"/><polygon points="676.98,312.62 692.75,321.69 693.95,321.01 678.18,311.93" fill="#dcae7a"/><polygon points="689.06,309.75 697.37,314.53 705.48,312.65 708.76,308.00 700.45,303.22 693.42,305.71" fill="#8c8679"/><polygon points="684.68,311.08 688.68,308.79 688.68,318.79 684.68,321.08" fill="#7a4c2a"/><line x1="704.28" y1="302.72" x2="704.28" y2="310.72" stroke="#6a4224" stroke-width="1.2"/><polygon points="698.08,300.53 713.85,309.60 715.05,308.92 699.28,299.84" fill="#dcae7a"/><polygon points="710.16,297.66 718.47,302.44 726.58,300.56 729.86,295.91 721.55,291.13 714.52,293.62" fill="#8c8679"/><polygon points="705.78,298.99 709.78,296.70 709.78,306.70 705.78,308.99" fill="#7a4c2a"/><line x1="725.38" y1="290.63" x2="725.38" y2="298.63" stroke="#6a4224" stroke-width="1.2"/><polygon points="719.18,288.44 734.95,297.51 736.15,296.82 720.38,287.75" fill="#dcae7a"/><polygon points="731.26,285.56 739.57,290.35 747.68,288.47 750.96,283.82 742.65,279.03 735.62,281.53" fill="#8c8679"/><polygon points="726.88,286.90 730.88,284.60 730.88,294.60 726.88,296.90" fill="#7a4c2a"/><line x1="746.48" y1="278.54" x2="746.48" y2="286.54" stroke="#6a4224" stroke-width="1.2"/><polygon points="740.28,276.35 756.05,285.42 757.25,284.73 741.48,275.66" fill="#dcae7a"/><polygon points="574.68,371.25 590.45,380.32 591.95,379.46 576.18,370.39" fill="#d8a672"/><line x1="574.38" y1="371.42" x2="590.15" y2="380.49" stroke="#5e3b1e" stroke-width="0.55"/><polygon points="585.23,365.20 601.00,374.27 602.50,373.41 586.73,364.34" fill="#d8a672"/><line x1="584.93" y1="365.37" x2="600.70" y2="374.45" stroke="#5e3b1e" stroke-width="0.55"/><polygon points="595.78,359.15 611.55,368.23 613.05,367.37 597.28,358.30" fill="#d8a672"/><line x1="595.48" y1="359.33" x2="611.25" y2="368.40" stroke="#5e3b1e" stroke-width="0.55"/><polygon points="606.33,353.11 622.10,362.18 623.60,361.32 607.83,352.25" fill="#d8a672"/><line x1="606.03" y1="353.28" x2="621.80" y2="362.35" stroke="#5e3b1e" stroke-width="0.55"/><polygon points="616.88,347.06 632.65,356.14 634.15,355.28 618.38,346.20" fill="#d8a672"/><line x1="616.58" y1="347.23" x2="632.35" y2="356.31" stroke="#5e3b1e" stroke-width="0.55"/><polygon points="627.43,341.02 643.20,350.09 644.70,349.23 628.93,340.16" fill="#d8a672"/><line x1="627.13" y1="341.19" x2="642.90" y2="350.26" stroke="#5e3b1e" stroke-width="0.55"/><polygon points="637.98,334.97 653.75,344.04 655.25,343.18 639.48,334.11" fill="#d8a672"/><line x1="637.68" y1="335.14" x2="653.45" y2="344.22" stroke="#5e3b1e" stroke-width="0.55"/><polygon points="648.53,328.93 664.30,338.00 665.50,337.31 649.73,328.24" fill="#d7a672"/><polygon points="659.08,322.88 674.85,331.95 676.35,331.09 660.58,322.02" fill="#d8a672"/><line x1="658.78" y1="323.05" x2="674.55" y2="332.12" stroke="#5e3b1e" stroke-width="0.55"/><polygon points="669.63,316.83 685.40,325.91 686.60,325.22 670.83,316.15" fill="#d7a672"/><polygon points="680.18,310.79 695.95,319.86 697.45,319.00 681.68,309.93" fill="#d8a672"/><line x1="679.88" y1="310.96" x2="695.65" y2="320.03" stroke="#5e3b1e" stroke-width="0.55"/><polygon points="690.73,304.74 706.50,313.81 707.70,313.13 691.93,304.05" fill="#d7a672"/><polygon points="701.28,298.70 717.05,307.77 718.55,306.91 702.78,297.84" fill="#d8a672"/><line x1="700.98" y1="298.87" x2="716.75" y2="307.94" stroke="#5e3b1e" stroke-width="0.55"/><polygon points="711.83,292.65 727.60,301.72 728.80,301.04 713.03,291.96" fill="#d7a672"/><polygon points="722.38,286.60 738.15,295.68 739.65,294.82 723.88,285.74" fill="#d8a672"/><line x1="722.08" y1="286.78" x2="737.85" y2="295.85" stroke="#5e3b1e" stroke-width="0.55"/><polygon points="732.93,280.56 748.70,289.63 749.90,288.94 734.13,279.87" fill="#d7a672"/><polygon points="743.48,274.51 759.25,283.59 760.75,282.73 744.98,273.65" fill="#d8a672"/><line x1="743.18" y1="274.68" x2="758.95" y2="283.76" stroke="#5e3b1e" stroke-width="0.55"/><polygon points="600.45,383.32 613.81,391.01 621.36,386.68 608.00,378.99" fill="#e5c17a"/><line x1="600.45" y1="383.32" x2="608.00" y2="378.99" stroke="#8a5a30" stroke-width="0.5"/><polygon points="611.00,377.27 624.36,384.96 631.91,380.64 618.55,372.95" fill="#e5c17a"/><line x1="611.00" y1="377.27" x2="618.55" y2="372.95" stroke="#8a5a30" stroke-width="0.5"/><polygon points="621.55,371.23 634.91,378.92 642.46,374.59 629.10,366.90" fill="#e5c17a"/><line x1="621.55" y1="371.23" x2="629.10" y2="366.90" stroke="#8a5a30" stroke-width="0.5"/><polygon points="632.10,365.18 645.46,372.87 653.01,368.55 639.65,360.85" fill="#e5c17a"/><line x1="632.10" y1="365.18" x2="639.65" y2="360.85" stroke="#8a5a30" stroke-width="0.5"/><polygon points="642.65,359.13 656.01,366.83 663.56,362.50 650.20,354.81" fill="#e5c17a"/><line x1="642.65" y1="359.13" x2="650.20" y2="354.81" stroke="#8a5a30" stroke-width="0.5"/><polygon points="653.20,353.09 666.56,360.78 674.11,356.45 660.75,348.76" fill="#e5c17a"/><line x1="653.20" y1="353.09" x2="660.75" y2="348.76" stroke="#8a5a30" stroke-width="0.5"/><polygon points="668.62,346.46 676.93,351.24 685.04,349.36 688.32,344.71 680.02,339.93 672.98,342.42" fill="#8c8679"/><polygon points="664.25,347.79 668.25,345.50 668.25,355.50 664.25,357.79" fill="#7a4c2a"/><line x1="683.85" y1="339.43" x2="683.85" y2="347.43" stroke="#6a4224" stroke-width="1.2"/><polygon points="677.65,337.24 693.41,346.31 694.61,345.62 678.85,336.55" fill="#dcae7a"/><polygon points="689.72,334.37 698.03,339.15 706.14,337.27 709.42,332.62 701.12,327.84 694.08,330.33" fill="#8c8679"/><polygon points="685.35,335.70 689.35,333.41 689.35,343.41 685.35,345.70" fill="#7a4c2a"/><line x1="704.95" y1="327.34" x2="704.95" y2="335.34" stroke="#6a4224" stroke-width="1.2"/><polygon points="698.75,325.15 714.51,334.22 715.71,333.53 699.95,324.46" fill="#dcae7a"/><polygon points="710.82,322.27 719.13,327.06 727.24,325.18 730.52,320.53 722.22,315.74 715.18,318.24" fill="#8c8679"/><polygon points="706.45,323.61 710.45,321.31 710.45,331.31 706.45,333.61" fill="#7a4c2a"/><line x1="726.05" y1="315.25" x2="726.05" y2="323.25" stroke="#6a4224" stroke-width="1.2"/><polygon points="719.85,313.06 735.61,322.13 736.81,321.44 721.05,312.37" fill="#dcae7a"/><polygon points="731.92,310.18 740.23,314.96 748.34,313.09 751.62,308.43 743.32,303.65 736.28,306.15" fill="#8c8679"/><polygon points="727.55,311.52 731.55,309.22 731.55,319.22 727.55,321.52" fill="#7a4c2a"/><line x1="747.15" y1="303.15" x2="747.15" y2="311.15" stroke="#6a4224" stroke-width="1.2"/><polygon points="740.95,300.96 756.71,310.04 757.91,309.35 742.15,300.28" fill="#dcae7a"/><polygon points="753.02,298.09 761.33,302.87 769.44,301.00 772.72,296.34 764.42,291.56 757.38,294.05" fill="#8c8679"/><polygon points="748.65,299.42 752.65,297.13 752.65,307.13 748.65,309.42" fill="#7a4c2a"/><line x1="768.25" y1="291.06" x2="768.25" y2="299.06" stroke="#6a4224" stroke-width="1.2"/><polygon points="762.05,288.87 777.81,297.95 779.01,297.26 763.25,288.19" fill="#dcae7a"/><polygon points="596.45,383.77 612.21,392.85 613.71,391.99 597.95,382.91" fill="#d8a672"/><line x1="596.15" y1="383.94" x2="611.91" y2="393.02" stroke="#5e3b1e" stroke-width="0.55"/><polygon points="607.00,377.73 622.76,386.80 624.26,385.94 608.50,376.87" fill="#d8a672"/><line x1="606.70" y1="377.90" x2="622.46" y2="386.97" stroke="#5e3b1e" stroke-width="0.55"/><polygon points="617.55,371.68 633.31,380.75 634.81,379.89 619.05,370.82" fill="#d8a672"/><line x1="617.25" y1="371.85" x2="633.01" y2="380.93" stroke="#5e3b1e" stroke-width="0.55"/><polygon points="628.10,365.64 643.86,374.71 645.36,373.85 629.60,364.78" fill="#d8a672"/><line x1="627.80" y1="365.81" x2="643.56" y2="374.88" stroke="#5e3b1e" stroke-width="0.55"/><polygon points="638.65,359.59 654.41,368.66 655.91,367.80 640.15,358.73" fill="#d8a672"/><line x1="638.35" y1="359.76" x2="654.11" y2="368.83" stroke="#5e3b1e" stroke-width="0.55"/><polygon points="649.20,353.54 664.96,362.62 666.46,361.76 650.70,352.68" fill="#d8a672"/><line x1="648.90" y1="353.72" x2="664.66" y2="362.79" stroke="#5e3b1e" stroke-width="0.55"/><polygon points="659.75,347.50 675.51,356.57 677.01,355.71 661.25,346.64" fill="#d8a672"/><line x1="659.45" y1="347.67" x2="675.21" y2="356.74" stroke="#5e3b1e" stroke-width="0.55"/><polygon points="670.30,341.45 686.06,350.52 687.26,349.84 671.50,340.76" fill="#d7a672"/><polygon points="680.85,335.41 696.61,344.48 698.11,343.62 682.35,334.55" fill="#d8a672"/><line x1="680.55" y1="335.58" x2="696.31" y2="344.65" stroke="#5e3b1e" stroke-width="0.55"/><polygon points="691.40,329.36 707.16,338.43 708.36,337.75 692.60,328.67" fill="#d7a672"/><polygon points="701.95,323.31 717.71,332.39 719.21,331.53 703.45,322.45" fill="#d8a672"/><line x1="701.65" y1="323.49" x2="717.41" y2="332.56" stroke="#5e3b1e" stroke-width="0.55"/><polygon points="712.50,317.27 728.26,326.34 729.46,325.65 713.70,316.58" fill="#d7a672"/><polygon points="723.05,311.22 738.81,320.30 740.31,319.44 724.55,310.36" fill="#d8a672"/><line x1="722.75" y1="311.39" x2="738.51" y2="320.47" stroke="#5e3b1e" stroke-width="0.55"/><polygon points="733.60,305.18 749.36,314.25 750.56,313.56 734.80,304.49" fill="#d7a672"/><polygon points="744.15,299.13 759.91,308.20 761.41,307.34 745.65,298.27" fill="#d8a672"/><line x1="743.85" y1="299.30" x2="759.61" y2="308.38" stroke="#5e3b1e" stroke-width="0.55"/><polygon points="754.70,293.08 770.46,302.16 771.66,301.47 755.90,292.40" fill="#d7a672"/><polygon points="765.25,287.04 781.01,296.11 782.51,295.25 766.75,286.18" fill="#d8a672"/><line x1="764.95" y1="287.21" x2="780.71" y2="296.28" stroke="#5e3b1e" stroke-width="0.55"/><polygon points="622.21,395.84 635.57,403.54 643.12,399.21 629.76,391.52" fill="#e5c17a"/><line x1="622.21" y1="395.84" x2="629.76" y2="391.52" stroke="#8a5a30" stroke-width="0.5"/><polygon points="632.76,389.80 646.12,397.49 653.67,393.16 640.31,385.47" fill="#e5c17a"/><line x1="632.76" y1="389.80" x2="640.31" y2="385.47" stroke="#8a5a30" stroke-width="0.5"/><polygon points="643.31,383.75 656.67,391.44 664.22,387.12 650.86,379.43" fill="#e5c17a"/><line x1="643.31" y1="383.75" x2="650.86" y2="379.43" stroke="#8a5a30" stroke-width="0.5"/><polygon points="653.86,377.71 667.22,385.40 674.77,381.07 661.41,373.38" fill="#e5c17a"/><line x1="653.86" y1="377.71" x2="661.41" y2="373.38" stroke="#8a5a30" stroke-width="0.5"/><polygon points="664.41,371.66 677.77,379.35 685.32,375.03 671.96,367.33" fill="#e5c17a"/><line x1="664.41" y1="371.66" x2="671.96" y2="367.33" stroke="#8a5a30" stroke-width="0.5"/><polygon points="674.96,365.62 688.32,373.31 695.87,368.98 682.51,361.29" fill="#e5c17a"/><line x1="674.96" y1="365.62" x2="682.51" y2="361.29" stroke="#8a5a30" stroke-width="0.5"/><polygon points="690.39,358.98 698.69,363.76 706.80,361.89 710.09,357.24 701.78,352.45 694.74,354.95" fill="#8c8679"/><polygon points="686.01,360.32 690.01,358.02 690.01,368.02 686.01,370.32" fill="#7a4c2a"/><line x1="705.61" y1="351.96" x2="705.61" y2="359.96" stroke="#6a4224" stroke-width="1.2"/><polygon points="699.41,349.77 715.17,358.84 716.37,358.15 700.61,349.08" fill="#dcae7a"/><polygon points="711.49,346.89 719.79,351.67 727.90,349.80 731.19,345.14 722.88,340.36 715.84,342.86" fill="#8c8679"/><polygon points="707.11,348.22 711.11,345.93 711.11,355.93 707.11,358.22" fill="#7a4c2a"/><line x1="726.71" y1="339.86" x2="726.71" y2="347.86" stroke="#6a4224" stroke-width="1.2"/><polygon points="720.51,337.67 736.27,346.75 737.47,346.06 721.71,336.99" fill="#dcae7a"/><polygon points="732.59,334.80 740.89,339.58 749.00,337.70 752.29,333.05 743.98,328.27 736.94,330.76" fill="#8c8679"/><polygon points="728.21,336.13 732.21,333.84 732.21,343.84 728.21,346.13" fill="#7a4c2a"/><line x1="747.81" y1="327.77" x2="747.81" y2="335.77" stroke="#6a4224" stroke-width="1.2"/><polygon points="741.61,325.58 757.37,334.66 758.57,333.97 742.81,324.89" fill="#dcae7a"/><polygon points="753.69,322.71 761.99,327.49 770.10,325.61 773.39,320.96 765.08,316.18 758.04,318.67" fill="#8c8679"/><polygon points="749.31,324.04 753.31,321.75 753.31,331.75 749.31,334.04" fill="#7a4c2a"/><line x1="768.91" y1="315.68" x2="768.91" y2="323.68" stroke="#6a4224" stroke-width="1.2"/><polygon points="762.71,313.49 778.47,322.56 779.67,321.88 763.91,312.80" fill="#dcae7a"/><polygon points="774.79,310.62 783.09,315.40 791.20,313.52 794.49,308.87 786.18,304.09 779.14,306.58" fill="#8c8679"/><polygon points="770.41,311.95 774.41,309.66 774.41,319.66 770.41,321.95" fill="#7a4c2a"/><line x1="790.01" y1="303.59" x2="790.01" y2="311.59" stroke="#6a4224" stroke-width="1.2"/><polygon points="783.81,301.40 799.57,310.47 800.77,309.78 785.01,300.71" fill="#dcae7a"/><polygon points="618.21,396.30 633.97,405.37 635.47,404.51 619.71,395.44" fill="#d8a672"/><line x1="617.91" y1="396.47" x2="633.67" y2="405.54" stroke="#5e3b1e" stroke-width="0.55"/><polygon points="628.76,390.25 644.52,399.33 646.02,398.47 630.26,389.39" fill="#d8a672"/><line x1="628.46" y1="390.42" x2="644.22" y2="399.50" stroke="#5e3b1e" stroke-width="0.55"/><polygon points="639.31,384.21 655.07,393.28 656.57,392.42 640.81,383.35" fill="#d8a672"/><line x1="639.01" y1="384.38" x2="654.77" y2="393.45" stroke="#5e3b1e" stroke-width="0.55"/><polygon points="649.86,378.16 665.62,387.23 667.12,386.37 651.36,377.30" fill="#d8a672"/><line x1="649.56" y1="378.33" x2="665.32" y2="387.41" stroke="#5e3b1e" stroke-width="0.55"/><polygon points="660.41,372.12 676.17,381.19 677.67,380.33 661.91,371.26" fill="#d8a672"/><line x1="660.11" y1="372.29" x2="675.87" y2="381.36" stroke="#5e3b1e" stroke-width="0.55"/><polygon points="670.96,366.07 686.72,375.14 688.22,374.28 672.46,365.21" fill="#d8a672"/><line x1="670.66" y1="366.24" x2="686.42" y2="375.31" stroke="#5e3b1e" stroke-width="0.55"/><polygon points="681.51,360.02 697.27,369.10 698.77,368.24 683.01,359.16" fill="#d8a672"/><line x1="681.21" y1="360.20" x2="696.97" y2="369.27" stroke="#5e3b1e" stroke-width="0.55"/><polygon points="692.06,353.98 707.82,363.05 709.02,362.36 693.26,353.29" fill="#d7a672"/><polygon points="702.61,347.93 718.37,357.01 719.87,356.15 704.11,347.07" fill="#d8a672"/><line x1="702.31" y1="348.10" x2="718.07" y2="357.18" stroke="#5e3b1e" stroke-width="0.55"/><polygon points="713.16,341.89 728.92,350.96 730.12,350.27 714.36,341.20" fill="#d7a672"/><polygon points="723.71,335.84 739.47,344.91 740.97,344.05 725.21,334.98" fill="#d8a672"/><line x1="723.41" y1="336.01" x2="739.17" y2="345.09" stroke="#5e3b1e" stroke-width="0.55"/><polygon points="734.26,329.79 750.02,338.87 751.22,338.18 735.46,329.11" fill="#d7a672"/><polygon points="744.81,323.75 760.57,332.82 762.07,331.96 746.31,322.89" fill="#d8a672"/><line x1="744.51" y1="323.92" x2="760.27" y2="332.99" stroke="#5e3b1e" stroke-width="0.55"/><polygon points="755.36,317.70 771.12,326.78 772.32,326.09 756.56,317.02" fill="#d7a672"/><polygon points="765.91,311.66 781.67,320.73 783.17,319.87 767.41,310.80" fill="#d8a672"/><line x1="765.61" y1="311.83" x2="781.37" y2="320.90" stroke="#5e3b1e" stroke-width="0.55"/><polygon points="776.46,305.61 792.22,314.68 793.42,314.00 777.66,304.92" fill="#d7a672"/><polygon points="787.01,299.57 802.77,308.64 804.27,307.78 788.51,298.71" fill="#d8a672"/><line x1="786.71" y1="299.74" x2="802.47" y2="308.81" stroke="#5e3b1e" stroke-width="0.55"/><polygon points="643.97,408.37 657.34,416.06 664.89,411.74 651.52,404.04" fill="#e5c17a"/><line x1="643.97" y1="408.37" x2="651.52" y2="404.04" stroke="#8a5a30" stroke-width="0.5"/><polygon points="654.52,402.32 667.89,410.02 675.44,405.69 662.07,398.00" fill="#e5c17a"/><line x1="654.52" y1="402.32" x2="662.07" y2="398.00" stroke="#8a5a30" stroke-width="0.5"/><polygon points="665.07,396.28 678.44,403.97 685.99,399.64 672.62,391.95" fill="#e5c17a"/><line x1="665.07" y1="396.28" x2="672.62" y2="391.95" stroke="#8a5a30" stroke-width="0.5"/><polygon points="675.62,390.23 688.99,397.92 696.54,393.60 683.17,385.91" fill="#e5c17a"/><line x1="675.62" y1="390.23" x2="683.17" y2="385.91" stroke="#8a5a30" stroke-width="0.5"/><polygon points="686.17,384.19 699.54,391.88 707.09,387.55 693.72,379.86" fill="#e5c17a"/><line x1="686.17" y1="384.19" x2="693.72" y2="379.86" stroke="#8a5a30" stroke-width="0.5"/><polygon points="696.72,378.14 710.09,385.83 717.64,381.51 704.27,373.81" fill="#e5c17a"/><line x1="696.72" y1="378.14" x2="704.27" y2="373.81" stroke="#8a5a30" stroke-width="0.5"/><polygon points="712.15,371.51 720.46,376.29 728.56,374.41 731.85,369.76 723.54,364.98 716.51,367.47" fill="#8c8679"/><polygon points="707.77,372.84 711.77,370.55 711.77,380.55 707.77,382.84" fill="#7a4c2a"/><line x1="727.37" y1="364.48" x2="727.37" y2="372.48" stroke="#6a4224" stroke-width="1.2"/><polygon points="721.17,362.29 736.94,371.37 738.14,370.68 722.37,361.60" fill="#dcae7a"/><polygon points="733.25,359.42 741.56,364.20 749.66,362.32 752.95,357.67 744.64,352.89 737.61,355.38" fill="#8c8679"/><polygon points="728.87,360.75 732.87,358.46 732.87,368.46 728.87,370.75" fill="#7a4c2a"/><line x1="748.47" y1="352.39" x2="748.47" y2="360.39" stroke="#6a4224" stroke-width="1.2"/><polygon points="742.27,350.20 758.04,359.27 759.24,358.59 743.47,349.51" fill="#dcae7a"/><polygon points="754.35,347.33 762.66,352.11 770.76,350.23 774.05,345.58 765.74,340.80 758.71,343.29" fill="#8c8679"/><polygon points="749.97,348.66 753.97,346.37 753.97,356.37 749.97,358.66" fill="#7a4c2a"/><line x1="769.57" y1="340.30" x2="769.57" y2="348.30" stroke="#6a4224" stroke-width="1.2"/><polygon points="763.37,338.11 779.14,347.18 780.34,346.49 764.57,337.42" fill="#dcae7a"/><polygon points="775.45,335.23 783.76,340.02 791.86,338.14 795.15,333.49 786.84,328.71 779.81,331.20" fill="#8c8679"/><polygon points="771.07,336.57 775.07,334.28 775.07,344.28 771.07,346.57" fill="#7a4c2a"/><line x1="790.67" y1="328.21" x2="790.67" y2="336.21" stroke="#6a4224" stroke-width="1.2"/><polygon points="784.47,326.02 800.24,335.09 801.44,334.40 785.67,325.33" fill="#dcae7a"/><polygon points="796.55,323.14 804.86,327.92 812.96,326.05 816.25,321.39 807.94,316.61 800.91,319.11" fill="#8c8679"/><polygon points="792.17,324.48 796.17,322.18 796.17,332.18 792.17,334.48" fill="#7a4c2a"/><line x1="811.77" y1="316.12" x2="811.77" y2="324.12" stroke="#6a4224" stroke-width="1.2"/><polygon points="805.57,313.93 821.34,323.00 822.54,322.31 806.77,313.24" fill="#dcae7a"/><polygon points="639.97,408.83 655.74,417.90 657.24,417.04 641.47,407.97" fill="#d8a672"/><line x1="639.67" y1="409.00" x2="655.44" y2="418.07" stroke="#5e3b1e" stroke-width="0.55"/><polygon points="650.52,402.78 666.29,411.85 667.79,410.99 652.02,401.92" fill="#d8a672"/><line x1="650.22" y1="402.95" x2="665.99" y2="412.02" stroke="#5e3b1e" stroke-width="0.55"/><polygon points="661.07,396.73 676.84,405.81 678.34,404.95 662.57,395.87" fill="#d8a672"/><line x1="660.77" y1="396.91" x2="676.54" y2="405.98" stroke="#5e3b1e" stroke-width="0.55"/><polygon points="671.62,390.69 687.39,399.76 688.89,398.90 673.12,389.83" fill="#d8a672"/><line x1="671.32" y1="390.86" x2="687.09" y2="399.93" stroke="#5e3b1e" stroke-width="0.55"/><polygon points="682.17,384.64 697.94,393.71 699.44,392.86 683.67,383.78" fill="#d8a672"/><line x1="681.87" y1="384.81" x2="697.64" y2="393.89" stroke="#5e3b1e" stroke-width="0.55"/><polygon points="692.72,378.60 708.49,387.67 709.99,386.81 694.22,377.74" fill="#d8a672"/><line x1="692.42" y1="378.77" x2="708.19" y2="387.84" stroke="#5e3b1e" stroke-width="0.55"/><polygon points="703.27,372.55 719.04,381.62 720.54,380.76 704.77,371.69" fill="#d8a672"/><line x1="702.97" y1="372.72" x2="718.74" y2="381.79" stroke="#5e3b1e" stroke-width="0.55"/><polygon points="713.82,366.50 729.59,375.58 730.79,374.89 715.02,365.82" fill="#d7a672"/><polygon points="724.37,360.46 740.14,369.53 741.64,368.67 725.87,359.60" fill="#d8a672"/><line x1="724.07" y1="360.63" x2="739.84" y2="369.70" stroke="#5e3b1e" stroke-width="0.55"/><polygon points="734.92,354.41 750.69,363.49 751.89,362.80 736.12,353.72" fill="#d7a672"/><polygon points="745.47,348.37 761.24,357.44 762.74,356.58 746.97,347.51" fill="#d8a672"/><line x1="745.17" y1="348.54" x2="760.94" y2="357.61" stroke="#5e3b1e" stroke-width="0.55"/><polygon points="756.02,342.32 771.79,351.39 772.99,350.71 757.22,341.63" fill="#d7a672"/><polygon points="766.57,336.28 782.34,345.35 783.84,344.49 768.07,335.42" fill="#d8a672"/><line x1="766.27" y1="336.45" x2="782.04" y2="345.52" stroke="#5e3b1e" stroke-width="0.55"/><polygon points="777.12,330.23 792.89,339.30 794.09,338.61 778.32,329.54" fill="#d7a672"/><polygon points="787.67,324.18 803.44,333.26 804.94,332.40 789.17,323.32" fill="#d8a672"/><line x1="787.37" y1="324.36" x2="803.14" y2="333.43" stroke="#5e3b1e" stroke-width="0.55"/><polygon points="798.22,318.14 813.99,327.21 815.19,326.52 799.42,317.45" fill="#d7a672"/><polygon points="808.77,312.09 824.54,321.16 826.04,320.30 810.27,311.23" fill="#d8a672"/><line x1="808.47" y1="312.26" x2="824.24" y2="321.34" stroke="#5e3b1e" stroke-width="0.55"/><polygon points="661.74,421.35 670.00,426.11 838.80,329.37 830.54,324.62" fill="#a06a3c"/><polygon points="669.24,421.07 673.50,423.53 676.70,421.69 672.44,419.24" fill="#dcb07c"/><line x1="672.44" y1="419.24" x2="676.70" y2="421.69" stroke="#6e4526" stroke-width="0.5"/><polygon points="679.44,415.23 683.70,417.68 686.90,415.85 682.64,413.39" fill="#dcb07c"/><line x1="682.64" y1="413.39" x2="686.90" y2="415.85" stroke="#6e4526" stroke-width="0.5"/><polygon points="689.64,409.38 693.90,411.84 697.10,410.00 692.84,407.55" fill="#dcb07c"/><line x1="692.84" y1="407.55" x2="697.10" y2="410.00" stroke="#6e4526" stroke-width="0.5"/><polygon points="699.84,403.54 704.10,405.99 707.30,404.16 703.04,401.70" fill="#dcb07c"/><line x1="703.04" y1="401.70" x2="707.30" y2="404.16" stroke="#6e4526" stroke-width="0.5"/><polygon points="710.04,397.69 714.30,400.15 717.50,398.31 713.24,395.86" fill="#dcb07c"/><line x1="713.24" y1="395.86" x2="717.50" y2="398.31" stroke="#6e4526" stroke-width="0.5"/><polygon points="720.24,391.85 724.50,394.30 727.70,392.47 723.44,390.01" fill="#dcb07c"/><line x1="723.44" y1="390.01" x2="727.70" y2="392.47" stroke="#6e4526" stroke-width="0.5"/><polygon points="730.44,386.00 734.70,388.46 737.90,386.62 733.64,384.17" fill="#dcb07c"/><line x1="733.64" y1="384.17" x2="737.90" y2="386.62" stroke="#6e4526" stroke-width="0.5"/><polygon points="740.64,380.16 744.90,382.61 748.10,380.78 743.84,378.32" fill="#dcb07c"/><line x1="743.84" y1="378.32" x2="748.10" y2="380.78" stroke="#6e4526" stroke-width="0.5"/><polygon points="750.84,374.31 755.10,376.77 758.30,374.93 754.04,372.48" fill="#dcb07c"/><line x1="754.04" y1="372.48" x2="758.30" y2="374.93" stroke="#6e4526" stroke-width="0.5"/><polygon points="761.04,368.47 765.30,370.92 768.50,369.09 764.24,366.63" fill="#dcb07c"/><line x1="764.24" y1="366.63" x2="768.50" y2="369.09" stroke="#6e4526" stroke-width="0.5"/><polygon points="771.24,362.62 775.50,365.07 778.70,363.24 774.44,360.79" fill="#dcb07c"/><line x1="774.44" y1="360.79" x2="778.70" y2="363.24" stroke="#6e4526" stroke-width="0.5"/><polygon points="781.44,356.78 785.70,359.23 788.90,357.40 784.64,354.94" fill="#dcb07c"/><line x1="784.64" y1="354.94" x2="788.90" y2="357.40" stroke="#6e4526" stroke-width="0.5"/><polygon points="791.64,350.93 795.90,353.38 799.10,351.55 794.84,349.10" fill="#dcb07c"/><line x1="794.84" y1="349.10" x2="799.10" y2="351.55" stroke="#6e4526" stroke-width="0.5"/><polygon points="801.84,345.09 806.10,347.54 809.30,345.71 805.04,343.25" fill="#dcb07c"/><line x1="805.04" y1="343.25" x2="809.30" y2="345.71" stroke="#6e4526" stroke-width="0.5"/><polygon points="812.04,339.24 816.30,341.69 819.50,339.86 815.24,337.41" fill="#dcb07c"/><line x1="815.24" y1="337.41" x2="819.50" y2="339.86" stroke="#6e4526" stroke-width="0.5"/><polygon points="822.24,333.39 826.50,335.85 829.70,334.01 825.44,331.56" fill="#dcb07c"/><line x1="825.44" y1="331.56" x2="829.70" y2="334.01" stroke="#6e4526" stroke-width="0.5"/><polygon points="832.44,327.55 836.70,330.00 839.90,328.17 835.64,325.72" fill="#dcb07c"/><line x1="835.64" y1="325.72" x2="839.90" y2="328.17" stroke="#6e4526" stroke-width="0.5"/><polygon points="446.80,103.75 454.56,108.22 454.56,118.22 446.80,113.75" fill="#a66840"/><line x1="446.80" y1="113.75" x2="454.56" y2="118.22" stroke="#5e3b1e" stroke-width="0.5"/><polygon points="460.56,111.67 476.33,120.74 476.33,130.74 460.56,121.67" fill="#a66840"/><polygon points="460.56,121.67 471.91,128.20 463.91,132.79 452.56,126.26" fill="#dcac76"/><line x1="452.56" y1="126.26" x2="463.91" y2="132.79" stroke="#6e4526" stroke-width="0.5"/><line x1="460.56" y1="121.67" x2="476.33" y2="130.74" stroke="#5e3b1e" stroke-width="0.5"/><polygon points="482.33,124.20 498.09,133.27 498.09,143.27 482.33,134.20" fill="#a66840"/><polygon points="482.33,134.20 493.68,140.73 485.68,145.31 474.33,138.78" fill="#dcac76"/><line x1="474.33" y1="138.78" x2="485.68" y2="145.31" stroke="#6e4526" stroke-width="0.5"/><line x1="482.33" y1="134.20" x2="498.09" y2="143.27" stroke="#5e3b1e" stroke-width="0.5"/><polygon points="504.09,136.72 519.85,145.80 519.85,155.80 504.09,146.72" fill="#a66840"/><polygon points="504.09,146.72 515.44,153.26 507.44,157.84 496.09,151.31" fill="#dcac76"/><line x1="496.09" y1="151.31" x2="507.44" y2="157.84" stroke="#6e4526" stroke-width="0.5"/><line x1="504.09" y1="146.72" x2="519.85" y2="155.80" stroke="#5e3b1e" stroke-width="0.5"/><polygon points="525.85,149.25 541.62,158.32 541.62,168.32 525.85,159.25" fill="#a66840"/><polygon points="525.85,159.25 537.20,165.78 529.20,170.37 517.85,163.83" fill="#dcac76"/><line x1="517.85" y1="163.83" x2="529.20" y2="170.37" stroke="#6e4526" stroke-width="0.5"/><line x1="525.85" y1="159.25" x2="541.62" y2="168.32" stroke="#5e3b1e" stroke-width="0.5"/><polygon points="547.62,161.78 563.38,170.85 563.38,180.85 547.62,171.78" fill="#a66840"/><polygon points="547.62,171.78 558.97,178.31 550.97,182.89 539.62,176.36" fill="#dcac76"/><line x1="539.62" y1="176.36" x2="550.97" y2="182.89" stroke="#6e4526" stroke-width="0.5"/><line x1="547.62" y1="171.78" x2="563.38" y2="180.85" stroke="#5e3b1e" stroke-width="0.5"/><polygon points="569.38,174.30 585.14,183.38 585.14,193.38 569.38,184.30" fill="#a66840"/><polygon points="569.38,184.30 580.73,190.83 572.73,195.42 561.38,188.89" fill="#dcac76"/><line x1="561.38" y1="188.89" x2="572.73" y2="195.42" stroke="#6e4526" stroke-width="0.5"/><line x1="569.38" y1="184.30" x2="585.14" y2="193.38" stroke="#5e3b1e" stroke-width="0.5"/><polygon points="591.14,186.83 606.91,195.90 606.91,205.90 591.14,196.83" fill="#a66840"/><polygon points="591.14,196.83 602.49,203.36 594.49,207.95 583.14,201.41" fill="#dcac76"/><line x1="583.14" y1="201.41" x2="594.49" y2="207.95" stroke="#6e4526" stroke-width="0.5"/><line x1="591.14" y1="196.83" x2="606.91" y2="205.90" stroke="#5e3b1e" stroke-width="0.5"/><polygon points="612.91,199.35 628.67,208.43 628.67,218.43 612.91,209.35" fill="#a66840"/><polygon points="612.91,209.35 624.25,215.89 616.25,220.47 604.91,213.94" fill="#dcac76"/><line x1="604.91" y1="213.94" x2="616.25" y2="220.47" stroke="#6e4526" stroke-width="0.5"/><line x1="612.91" y1="209.35" x2="628.67" y2="218.43" stroke="#5e3b1e" stroke-width="0.5"/><polygon points="634.67,211.88 650.43,220.95 650.43,230.95 634.67,221.88" fill="#a66840"/><polygon points="634.67,221.88 646.02,228.41 638.02,233.00 626.67,226.47" fill="#dcac76"/><line x1="626.67" y1="226.47" x2="638.02" y2="233.00" stroke="#6e4526" stroke-width="0.5"/><line x1="634.67" y1="221.88" x2="650.43" y2="230.95" stroke="#5e3b1e" stroke-width="0.5"/><polygon points="656.43,224.41 672.19,233.48 672.19,243.48 656.43,234.41" fill="#a66840"/><polygon points="656.43,234.41 667.78,240.94 659.78,245.52 648.43,238.99" fill="#dcac76"/><line x1="648.43" y1="238.99" x2="659.78" y2="245.52" stroke="#6e4526" stroke-width="0.5"/><line x1="656.43" y1="234.41" x2="672.19" y2="243.48" stroke="#5e3b1e" stroke-width="0.5"/><polygon points="678.19,236.93 693.96,246.01 693.96,256.01 678.19,246.93" fill="#a66840"/><polygon points="678.19,246.93 689.54,253.47 681.54,258.05 670.19,251.52" fill="#dcac76"/><line x1="670.19" y1="251.52" x2="681.54" y2="258.05" stroke="#6e4526" stroke-width="0.5"/><line x1="678.19" y1="246.93" x2="693.96" y2="256.01" stroke="#5e3b1e" stroke-width="0.5"/><polygon points="699.96,249.46 715.72,258.53 715.72,268.53 699.96,259.46" fill="#a66840"/><polygon points="699.96,259.46 711.31,265.99 703.31,270.58 691.96,264.04" fill="#dcac76"/><line x1="691.96" y1="264.04" x2="703.31" y2="270.58" stroke="#6e4526" stroke-width="0.5"/><line x1="699.96" y1="259.46" x2="715.72" y2="268.53" stroke="#5e3b1e" stroke-width="0.5"/><polygon points="721.72,261.99 737.48,271.06 737.48,281.06 721.72,271.99" fill="#a66840"/><polygon points="721.72,271.99 733.07,278.52 725.07,283.10 713.72,276.57" fill="#dcac76"/><line x1="713.72" y1="276.57" x2="725.07" y2="283.10" stroke="#6e4526" stroke-width="0.5"/><line x1="721.72" y1="271.99" x2="737.48" y2="281.06" stroke="#5e3b1e" stroke-width="0.5"/><polygon points="743.48,274.51 759.25,283.59 759.25,293.59 743.48,284.51" fill="#a66840"/><polygon points="743.48,284.51 754.83,291.05 746.83,295.63 735.48,289.10" fill="#dcac76"/><line x1="735.48" y1="289.10" x2="746.83" y2="295.63" stroke="#6e4526" stroke-width="0.5"/><line x1="743.48" y1="284.51" x2="759.25" y2="293.59" stroke="#5e3b1e" stroke-width="0.5"/><polygon points="765.25,287.04 781.01,296.11 781.01,306.11 765.25,297.04" fill="#a66840"/><polygon points="765.25,297.04 776.60,303.57 768.60,308.16 757.25,301.62" fill="#dcac76"/><line x1="757.25" y1="301.62" x2="768.60" y2="308.16" stroke="#6e4526" stroke-width="0.5"/><line x1="765.25" y1="297.04" x2="781.01" y2="306.11" stroke="#5e3b1e" stroke-width="0.5"/><polygon points="787.01,299.57 802.77,308.64 802.77,318.64 787.01,309.57" fill="#a66840"/><polygon points="787.01,309.57 798.36,316.10 790.36,320.68 779.01,314.15" fill="#dcac76"/><line x1="779.01" y1="314.15" x2="790.36" y2="320.68" stroke="#6e4526" stroke-width="0.5"/><line x1="787.01" y1="309.57" x2="802.77" y2="318.64" stroke="#5e3b1e" stroke-width="0.5"/><polygon points="808.77,312.09 824.54,321.16 824.54,331.16 808.77,322.09" fill="#a66840"/><polygon points="808.77,322.09 820.12,328.62 812.12,333.21 800.77,326.68" fill="#dcac76"/><line x1="800.77" y1="326.68" x2="812.12" y2="333.21" stroke="#6e4526" stroke-width="0.5"/><line x1="808.77" y1="322.09" x2="824.54" y2="331.16" stroke="#5e3b1e" stroke-width="0.5"/><polygon points="830.54,324.62 838.80,329.37 838.80,339.37 830.54,334.62" fill="#a66840"/><line x1="830.54" y1="334.62" x2="838.80" y2="339.37" stroke="#5e3b1e" stroke-width="0.5"/><polygon points="270.50,196.17 445.00,96.17 445.00,99.47 270.50,199.47" fill="#a96b3d"/><polygon points="265.00,193.00 439.50,93.00 445.00,96.17 270.50,196.17" fill="#d09359"/><line x1="265.00" y1="193.00" x2="439.50" y2="93.00" stroke="#6a4322" stroke-width="0.55"/><line x1="270.50" y1="196.17" x2="445.00" y2="96.17" stroke="#7a4e2a" stroke-width="0.45"/><polygon points="278.00,200.48 452.50,100.48 452.50,103.78 278.00,203.78" fill="#a96b3d"/><polygon points="270.50,196.17 445.00,96.17 452.50,100.48 278.00,200.48" fill="#d09359"/><line x1="270.50" y1="196.17" x2="445.00" y2="96.17" stroke="#6a4322" stroke-width="0.55"/><line x1="278.00" y1="200.48" x2="452.50" y2="100.48" stroke="#7a4e2a" stroke-width="0.45"/><polygon points="291.76,208.40 460.56,111.67 460.56,114.97 291.76,211.70" fill="#a96b3d"/><polygon points="285.76,204.95 454.56,108.22 460.56,111.67 291.76,208.40" fill="#d09359"/><line x1="285.76" y1="204.95" x2="454.56" y2="108.22" stroke="#6a4322" stroke-width="0.55"/><line x1="291.76" y1="208.40" x2="460.56" y2="111.67" stroke="#7a4e2a" stroke-width="0.45"/><polygon points="313.53,220.93 482.33,124.20 482.33,127.50 313.53,224.23" fill="#a96b3d"/><polygon points="307.53,217.48 476.33,120.74 482.33,124.20 313.53,220.93" fill="#d09359"/><line x1="307.53" y1="217.48" x2="476.33" y2="120.74" stroke="#6a4322" stroke-width="0.55"/><line x1="313.53" y1="220.93" x2="482.33" y2="124.20" stroke="#7a4e2a" stroke-width="0.45"/><polygon points="335.29,233.46 504.09,136.72 504.09,140.02 335.29,236.76" fill="#a96b3d"/><polygon points="329.29,230.00 498.09,133.27 504.09,136.72 335.29,233.46" fill="#d09359"/><line x1="329.29" y1="230.00" x2="498.09" y2="133.27" stroke="#6a4322" stroke-width="0.55"/><line x1="335.29" y1="233.46" x2="504.09" y2="136.72" stroke="#7a4e2a" stroke-width="0.45"/><polygon points="357.05,245.98 525.85,149.25 525.85,152.55 357.05,249.28" fill="#a96b3d"/><polygon points="351.05,242.53 519.85,145.80 525.85,149.25 357.05,245.98" fill="#d09359"/><line x1="351.05" y1="242.53" x2="519.85" y2="145.80" stroke="#6a4322" stroke-width="0.55"/><line x1="357.05" y1="245.98" x2="525.85" y2="149.25" stroke="#7a4e2a" stroke-width="0.45"/><polygon points="378.82,258.51 547.62,161.78 547.62,165.08 378.82,261.81" fill="#a96b3d"/><polygon points="372.82,255.06 541.62,158.32 547.62,161.78 378.82,258.51" fill="#d09359"/><line x1="372.82" y1="255.06" x2="541.62" y2="158.32" stroke="#6a4322" stroke-width="0.55"/><line x1="378.82" y1="258.51" x2="547.62" y2="161.78" stroke="#7a4e2a" stroke-width="0.45"/><polygon points="400.58,271.04 569.38,174.30 569.38,177.60 400.58,274.34" fill="#a96b3d"/><polygon points="394.58,267.58 563.38,170.85 569.38,174.30 400.58,271.04" fill="#d09359"/><line x1="394.58" y1="267.58" x2="563.38" y2="170.85" stroke="#6a4322" stroke-width="0.55"/><line x1="400.58" y1="271.04" x2="569.38" y2="174.30" stroke="#7a4e2a" stroke-width="0.45"/><polygon points="422.34,283.56 591.14,186.83 591.14,190.13 422.34,286.86" fill="#a96b3d"/><polygon points="416.34,280.11 585.14,183.38 591.14,186.83 422.34,283.56" fill="#d09359"/><line x1="416.34" y1="280.11" x2="585.14" y2="183.38" stroke="#6a4322" stroke-width="0.55"/><line x1="422.34" y1="283.56" x2="591.14" y2="186.83" stroke="#7a4e2a" stroke-width="0.45"/><polygon points="444.11,296.09 612.91,199.35 612.91,202.65 444.11,299.39" fill="#a96b3d"/><polygon points="438.11,292.63 606.91,195.90 612.91,199.35 444.11,296.09" fill="#d09359"/><line x1="438.11" y1="292.63" x2="606.91" y2="195.90" stroke="#6a4322" stroke-width="0.55"/><line x1="444.11" y1="296.09" x2="612.91" y2="199.35" stroke="#7a4e2a" stroke-width="0.45"/><polygon points="465.87,308.61 634.67,211.88 634.67,215.18 465.87,311.91" fill="#a96b3d"/><polygon points="459.87,305.16 628.67,208.43 634.67,211.88 465.87,308.61" fill="#d09359"/><line x1="459.87" y1="305.16" x2="628.67" y2="208.43" stroke="#6a4322" stroke-width="0.55"/><line x1="465.87" y1="308.61" x2="634.67" y2="211.88" stroke="#7a4e2a" stroke-width="0.45"/><polygon points="487.63,321.14 656.43,224.41 656.43,227.71 487.63,324.44" fill="#a96b3d"/><polygon points="481.63,317.69 650.43,220.95 656.43,224.41 487.63,321.14" fill="#d09359"/><line x1="481.63" y1="317.69" x2="650.43" y2="220.95" stroke="#6a4322" stroke-width="0.55"/><line x1="487.63" y1="321.14" x2="656.43" y2="224.41" stroke="#7a4e2a" stroke-width="0.45"/><polygon points="509.39,333.67 678.19,236.93 678.19,240.23 509.39,336.97" fill="#a96b3d"/><polygon points="503.39,330.21 672.19,233.48 678.19,236.93 509.39,333.67" fill="#d09359"/><line x1="503.39" y1="330.21" x2="672.19" y2="233.48" stroke="#6a4322" stroke-width="0.55"/><line x1="509.39" y1="333.67" x2="678.19" y2="236.93" stroke="#7a4e2a" stroke-width="0.45"/><polygon points="531.16,346.19 699.96,249.46 699.96,252.76 531.16,349.49" fill="#a96b3d"/><polygon points="525.16,342.74 693.96,246.01 699.96,249.46 531.16,346.19" fill="#d09359"/><line x1="525.16" y1="342.74" x2="693.96" y2="246.01" stroke="#6a4322" stroke-width="0.55"/><line x1="531.16" y1="346.19" x2="699.96" y2="249.46" stroke="#7a4e2a" stroke-width="0.45"/><polygon points="552.92,358.72 721.72,261.99 721.72,265.29 552.92,362.02" fill="#a96b3d"/><polygon points="546.92,355.27 715.72,258.53 721.72,261.99 552.92,358.72" fill="#d09359"/><line x1="546.92" y1="355.27" x2="715.72" y2="258.53" stroke="#6a4322" stroke-width="0.55"/><line x1="552.92" y1="358.72" x2="721.72" y2="261.99" stroke="#7a4e2a" stroke-width="0.45"/><polygon points="574.68,371.25 743.48,274.51 743.48,277.81 574.68,374.55" fill="#a96b3d"/><polygon points="568.68,367.79 737.48,271.06 743.48,274.51 574.68,371.25" fill="#d09359"/><line x1="568.68" y1="367.79" x2="737.48" y2="271.06" stroke="#6a4322" stroke-width="0.55"/><line x1="574.68" y1="371.25" x2="743.48" y2="274.51" stroke="#7a4e2a" stroke-width="0.45"/><polygon points="596.45,383.77 765.25,287.04 765.25,290.34 596.45,387.07" fill="#a96b3d"/><polygon points="590.45,380.32 759.25,283.59 765.25,287.04 596.45,383.77" fill="#d09359"/><line x1="590.45" y1="380.32" x2="759.25" y2="283.59" stroke="#6a4322" stroke-width="0.55"/><line x1="596.45" y1="383.77" x2="765.25" y2="287.04" stroke="#7a4e2a" stroke-width="0.45"/><polygon points="618.21,396.30 787.01,299.57 787.01,302.87 618.21,399.60" fill="#a96b3d"/><polygon points="612.21,392.85 781.01,296.11 787.01,299.57 618.21,396.30" fill="#d09359"/><line x1="612.21" y1="392.85" x2="781.01" y2="296.11" stroke="#6a4322" stroke-width="0.55"/><line x1="618.21" y1="396.30" x2="787.01" y2="299.57" stroke="#7a4e2a" stroke-width="0.45"/><polygon points="639.97,408.83 808.77,312.09 808.77,315.39 639.97,412.13" fill="#a96b3d"/><polygon points="633.97,405.37 802.77,308.64 808.77,312.09 639.97,408.83" fill="#d09359"/><line x1="633.97" y1="405.37" x2="802.77" y2="308.64" stroke="#6a4322" stroke-width="0.55"/><line x1="639.97" y1="408.83" x2="808.77" y2="312.09" stroke="#7a4e2a" stroke-width="0.45"/><polygon points="661.74,421.35 830.54,324.62 830.54,327.92 661.74,424.65" fill="#a96b3d"/><polygon points="655.74,417.90 824.54,321.16 830.54,324.62 661.74,421.35" fill="#d09359"/><line x1="655.74" y1="417.90" x2="824.54" y2="321.16" stroke="#6a4322" stroke-width="0.55"/><line x1="661.74" y1="421.35" x2="830.54" y2="324.62" stroke="#7a4e2a" stroke-width="0.45"/><polygon points="670.00,426.11 844.50,326.11 853.00,331.00 678.50,431.00" fill="#d09359"/><line x1="670.00" y1="426.11" x2="844.50" y2="326.11" stroke="#6a4322" stroke-width="0.55"/><line x1="678.50" y1="431.00" x2="853.00" y2="331.00" stroke="#7a4e2a" stroke-width="0.45"/><polygon points="433.80,96.27 847.30,334.27 853.00,331.00 439.50,93.00" fill="#cf9459"/><line x1="446.80" y1="103.75" x2="840.30" y2="330.24" stroke="#6a4322" stroke-width="0.5"/></g>
<polygon points="265.00,193.00 439.50,93.00 853.00,331.00 678.50,431.00" fill="none" stroke="#40321f" stroke-width="0.9"/>
<g fill="#e61ee6" font-family="Liberation Sans, sans-serif" font-weight="bold">
 <text transform="translate(455.5,432) rotate(29.9)" font-size="6.6" textLength="13" lengthAdjust="spacingAndGlyphs">001</text>
 <text transform="translate(422.5,424.5) rotate(29.9)" font-size="7.6" textLength="74" lengthAdjust="spacingAndGlyphs">WE - Exterior Wall</text>
 <text transform="translate(802.5,490.5) rotate(-29.8)" font-size="6.8" textLength="13" lengthAdjust="spacingAndGlyphs">002</text>
 <text transform="translate(783,510.5) rotate(-29.8)" font-size="7.6" textLength="74.5" lengthAdjust="spacingAndGlyphs">WE - Exterior Wall</text>
 <text transform="translate(559,267) rotate(-29.8)" font-size="6.5" textLength="12" lengthAdjust="spacingAndGlyphs">002</text>
 <text transform="translate(540.5,293) rotate(-29.8)" font-size="6.8" textLength="81" lengthAdjust="spacingAndGlyphs">CE - Structural Ceiling</text>
</g>
<path d="M799,483 Q803,478 806,482" fill="none" stroke="#e040e0" stroke-width="0.8"/>
<path d="M563,260 Q566,256 569,259" fill="none" stroke="#e040e0" stroke-width="0.7"/>

</svg>

<div class="a" style="left:3.5px;top:78.5px;width:122px;height:28px;background:#f2f2f2;border:0.5px solid #dedede"></div>
<div class="a" style="left:4.5px;top:79.5px;width:27px;height:26px;background:#f6f6f6;border-right:0.5px solid #e0e0e0"></div>
<svg class="a" style="left:10px;top:86px" width="16" height="14"><path d="M1,7 L8,1 L15,7 L13,7 L13,13 L3,13 L3,7 Z" fill="#f0e6dc" stroke="#6a6a6a" stroke-width="0.8"/><path d="M1,7 L8,1 L15,7" fill="none" stroke="#777" stroke-width="1.6"/><rect x="6" y="9" width="3" height="4" fill="#d8a070"/><path d="M9,3.5 L15,7 L13,7 L13,13 L11,13 L11,6 Z" fill="#8a8a8a" opacity="0.7"/></svg>
<div class="a" style="left:33px;top:89.5px;font-size:4.9px;color:#444">3D View</div>
<div class="a" style="left:119.5px;top:89px;font-size:4.5px;color:#555">&#8211;</div>
<div class="a" style="left:4.5px;top:110.5px;font-size:4.9px;color:#444">3D View: {3D}</div>
<div class="a" style="left:88px;top:110.5px;font-size:4px;color:#555">&#9662;</div>
<svg class="a" style="left:94px;top:108.5px" width="8" height="9"><rect x="0.5" y="0.5" width="7" height="8" fill="#ddd" stroke="#777" stroke-width="0.6"/><path d="M0.5,3 H7.5 M0.5,5.5 H7.5 M3,0.5 V8.5" stroke="#777" stroke-width="0.5"/></svg>
<div class="a" style="left:103.5px;top:110.5px;font-size:4.9px;color:#444">Edit Type</div>
<div class="a" style="left:3px;top:118.3px;width:88px;height:0.5px;background:#dcdcdc"></div>
<div class="a" style="left:3px;top:545px;width:123px;height:11px;background:#efefef"></div>
<div class="a" style="left:4px;top:546px;width:8px;height:9px;background:#9ccbe8"></div>
<svg class="a" style="left:4px;top:546px" width="30" height="10"><path d="M1.5,3 H6.5 M1.5,6 H6.5" stroke="#2a5a8a" stroke-width="0.8"/><path d="M14,1.5 V8 M13,7 L14,8 L15,7 M17,8 V1.5 M16,2.5 L17,1.5 L18,2.5" stroke="#666" stroke-width="0.6" fill="none"/><path d="M24,1.5 V8 M23,7 L24,8 L25,7 M27,8 V1.5 M26,2.5 L27,1.5 L28,2.5" stroke="#666" stroke-width="0.6" fill="none"/></svg>
<div class="a" style="left:96px;top:547px;width:29px;height:8px;background:#f4f4f4;border:0.5px solid #e4e4e4"></div>
<div class="a" style="left:104px;top:547.8px;font-size:4.9px;color:#b0b0b0">Apply</div>
<div class="a" style="left:0;top:556px;width:127px;height:8.5px;background:#c8c8c8"></div>
<div class="a" style="left:3px;top:556.5px;width:72px;height:8px;background:#d9d9d9"></div>
<div class="a" style="left:75px;top:556.5px;width:28px;height:8px;background:#f0f0f0"></div>
<div class="a" style="left:4.5px;top:557.8px;font-size:4.85px;color:#444">Project Browser - SimpleBox.rvt</div>
<div class="a" style="left:78px;top:557.8px;font-size:4.85px;color:#444">Properties</div>
<div class="a" style="left:128px;top:557px;width:896px;height:8px;background:#eaeaea"></div>
<div class="a" style="left:318px;top:558px;width:706px;height:6px;background:#e2e2e2"></div>
<div class="a" style="left:137.5px;top:558.2px;font-size:4.7px;color:#444">1 : 100</div>
<div class="a" style="left:0;top:564.5px;width:1024px;height:11.5px;background:#f2f2f2;border-top:0.5px solid #dadada"></div>
<div class="a" style="left:3px;top:567.5px;font-size:4.7px;color:#333">Click to select, TAB for alternates, CTRL adds, SHIFT unselects.</div>
<svg class="a" style="left:1000px;top:566px" width="10" height="9"><rect x="1" y="1" width="4" height="4" fill="#4a9a7a"/><rect x="4" y="3" width="4" height="4" fill="#5a8ac0"/><rect x="2" y="5" width="3" height="3" fill="#7aba6a"/></svg>
<svg class="a" style="left:0;top:552px" width="330" height="14"><g transform="translate(166,8.7)"><rect x="-3" y="-2.5" width="6" height="5" fill="none" stroke="#555" stroke-width="0.7"/><path d="M-3,-2.5 L3,2.5 M3,-2.5 L-3,2.5" stroke="#555" stroke-width="0.5"/></g><g transform="translate(176,8.7)"><path d="M-3,-1.5 L0,-3 L3,-1.5 L3,2 L0,3.5 L-3,2 Z" fill="#3a7ac0"/><path d="M-3,-1.5 L0,0 L3,-1.5" fill="none" stroke="#8ab8e8" stroke-width="0.5"/></g><g transform="translate(187,8.7)"><rect x="-3" y="-3" width="4" height="4" fill="#e8c050"/><rect x="-1" y="-1" width="4" height="4" fill="#5a9ad0"/></g><g transform="translate(197,8.7)"><path d="M-3,-3 H2 V3 H-3 Z" fill="none" stroke="#7a9ab8" stroke-width="0.7"/><rect x="0" y="0" width="3" height="3" fill="#9ab8d0"/></g><g transform="translate(209,8.7)"><path d="M-3,-3 H3 V1 L0,3 H-3 Z" fill="none" stroke="#3a7ac0" stroke-width="0.8"/></g><g transform="translate(220,8.7)"><path d="M-3,3 V-2 L0,-3.5 L3,-2 V3" fill="none" stroke="#666" stroke-width="0.8"/><rect x="-1" y="0" width="2.5" height="3" fill="#d04040"/></g><g transform="translate(231,8.7)"><path d="M-3,3 V-2 L0,-3.5 L3,-2 V3" fill="none" stroke="#3a7ac0" stroke-width="0.8"/></g><g transform="translate(241,8.7)"><path d="M-3.5,0 L0,-3 L3.5,0 V3 H-3.5 Z" fill="none" stroke="#3a6a9a" stroke-width="0.8"/></g><g transform="translate(251,8.7)"><circle cx="-1.5" cy="0.5" r="1.3" fill="none" stroke="#777" stroke-width="0.6"/><circle cx="1.8" cy="0.5" r="1.3" fill="none" stroke="#777" stroke-width="0.6"/></g><g transform="translate(263,8.7)"><circle cx="0" cy="-1" r="1.6" fill="#3a7ac0"/><line x1="0" y1="0" x2="0" y2="3.5" stroke="#3a7ac0" stroke-width="0.8"/></g><g transform="translate(273,8.7)"><rect x="-3" y="-3" width="5" height="5" fill="none" stroke="#999" stroke-width="0.6"/><circle cx="1.5" cy="1.5" r="1.2" fill="#bbb"/></g><g transform="translate(284,8.7)"><rect x="-3" y="-3" width="6" height="6" fill="#d8a0a0"/><path d="M-3,0 H3 M0,-3 V3" stroke="#666" stroke-width="0.6"/></g><g transform="translate(294,8.7)"><path d="M-3,2 L0,-3 L3,2 Z" fill="none" stroke="#777" stroke-width="0.7"/></g><g transform="translate(305,8.7)"><path d="M-3,-3 H3 V3 H-3 Z" fill="none" stroke="#666" stroke-width="0.6" stroke-dasharray="1.5 1"/><rect x="1" y="-3.5" width="2.5" height="2.5" fill="#3a7ac0"/></g><g transform="translate(314.5,8.7)"><path d="M1,-2.5 L-1.5,0 L1,2.5" fill="none" stroke="#888" stroke-width="0.6"/></g></svg>
<!--BOTTOM-->
</body></html>
